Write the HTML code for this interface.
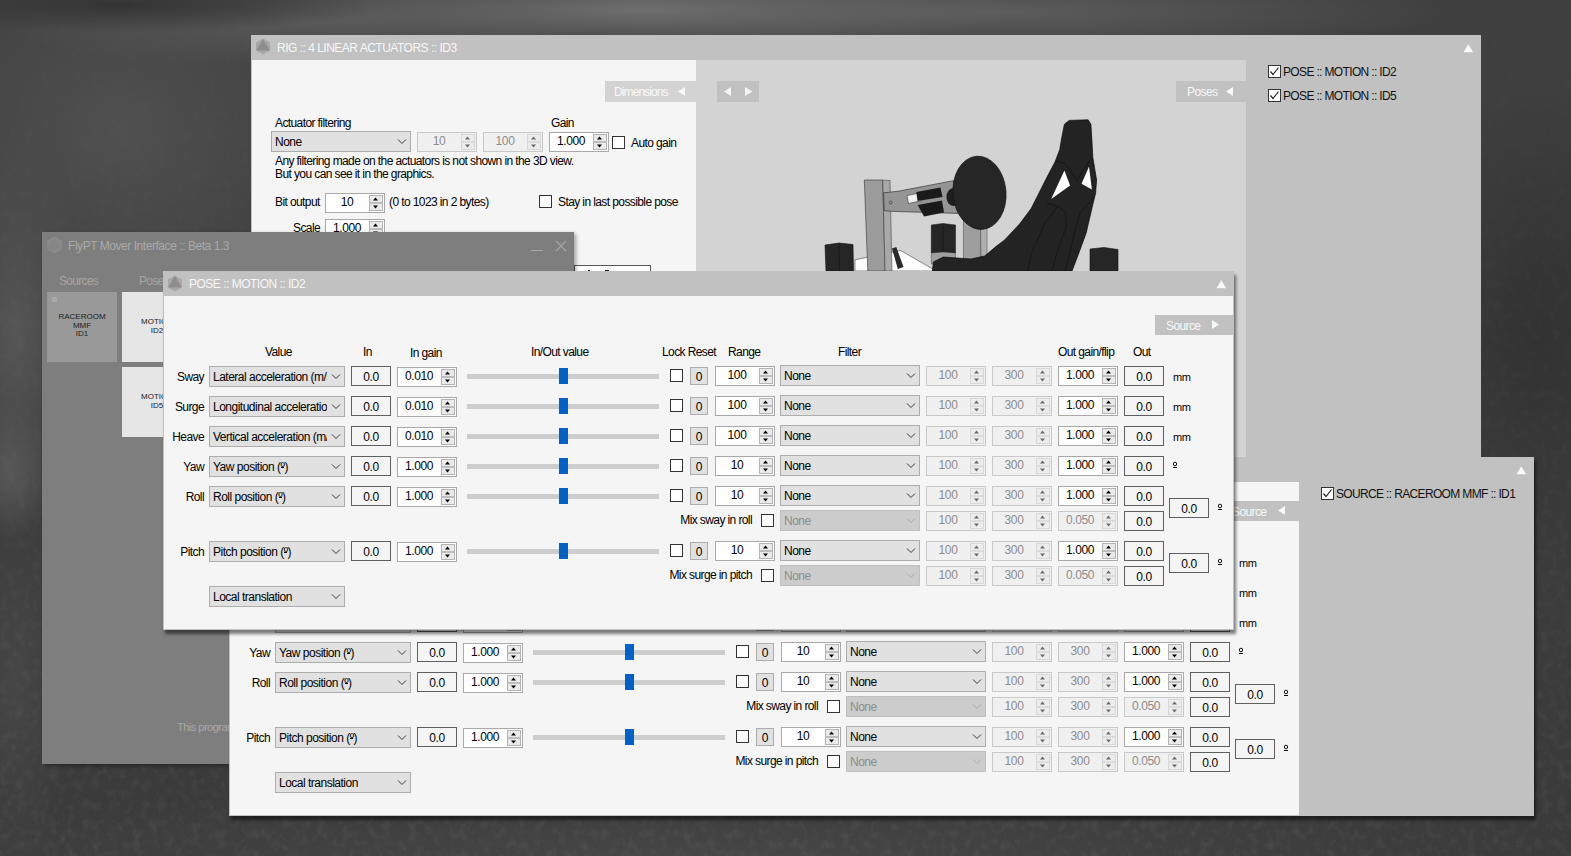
<!DOCTYPE html><html><head><meta charset="utf-8"><style>
html,body{margin:0;padding:0}
body{width:1571px;height:856px;overflow:hidden;position:relative;font-family:"Liberation Sans",sans-serif;font-size:12px}
#bg{position:absolute;left:0;top:0;width:1571px;height:856px;
background:
 radial-gradient(ellipse 260px 28px at 120px 5px, rgba(52,52,52,1), rgba(52,52,52,0) 100%),
 radial-gradient(ellipse 380px 40px at 640px 10px, rgba(110,110,110,1), rgba(110,110,110,0) 100%),
 radial-gradient(ellipse 450px 45px at 1000px 12px, rgba(92,92,92,1), rgba(92,92,92,0) 100%),
 radial-gradient(ellipse 300px 45px at 300px 22px, rgba(88,88,88,1), rgba(88,88,88,0) 100%),
 radial-gradient(ellipse 240px 210px at 120px 130px, rgba(80,80,80,1), rgba(80,80,80,0) 100%),
 radial-gradient(ellipse 70px 200px at 15px 330px, rgba(86,86,86,1), rgba(86,86,86,0) 100%),
 radial-gradient(ellipse 45px 70px at 10px 470px, rgba(88,88,88,1), rgba(88,88,88,0) 100%),
 radial-gradient(ellipse 900px 70px at 700px 856px, rgba(70,70,70,1), rgba(70,70,70,0) 100%),
 radial-gradient(ellipse 60px 200px at 15px 680px, rgba(70,70,70,1), rgba(70,70,70,0) 100%),
 radial-gradient(ellipse 150px 250px at 1540px 330px, rgba(50,50,50,1), rgba(50,50,50,0) 100%),
 linear-gradient(180deg, #404040 0%, #3c3c3c 60%, #3a3a3a 100%);}
.t{position:absolute;white-space:nowrap;line-height:14px}
.tb{position:absolute;border:1px solid;text-align:center;font-size:12px;letter-spacing:-0.4px;padding-top:1px;box-sizing:content-box}
.sp{position:absolute;border:1px solid}
.sp-t{position:absolute;left:0;top:0;width:42px;text-align:center;font-size:12px;letter-spacing:-0.4px}
.sp-b{position:absolute;right:1px;top:1px;bottom:1px;width:14px;border-left:1px solid}
.cb{position:absolute;border:1px solid;overflow:hidden}
.cb-t{position:absolute;left:3px;top:1px;overflow:hidden;white-space:nowrap;font-size:12px;letter-spacing:-0.5px}
.o{position:relative}
.o::after{content:"";position:absolute;left:0.5px;right:0.5px;top:7px;height:1px;background:currentColor}
.ck{position:absolute;width:11px;height:11px;border:1px solid}
.bt{position:absolute;border:1px solid #adadad;background:#e1e1e1;text-align:center;font-size:12px;padding-top:1px;box-sizing:content-box}
</style></head><body>
<div id="bg"></div>
<svg style="position:absolute;left:0;top:0" width="1571" height="856">
<defs>
<filter id="nz" x="0" y="0" width="100%" height="100%">
<feTurbulence type="fractalNoise" baseFrequency="0.12 0.1" numOctaves="2" seed="7" result="t"/>
<feColorMatrix type="matrix" values="0 0 0 0 1  0 0 0 0 1  0 0 0 0 1  1.4 0 0 0 -0.62" />
</filter>
<filter id="gr" x="0" y="0" width="100%" height="100%">
<feTurbulence type="fractalNoise" baseFrequency="0.9" numOctaves="1" seed="3"/>
<feColorMatrix type="matrix" values="0 0 0 0 1  0 0 0 0 1  0 0 0 0 1  1.6 0 0 0 -0.9" />
</filter>
<linearGradient id="mk" x1="0" y1="0" x2="0" y2="1"><stop offset="0" stop-color="#fff" stop-opacity="0.15"/><stop offset="0.55" stop-color="#fff" stop-opacity="0.5"/><stop offset="1" stop-color="#fff" stop-opacity="1"/></linearGradient>
<mask id="mm"><rect width="1571" height="856" fill="url(#mk)"/></mask>
</defs>
<g mask="url(#mm)">
<rect width="1571" height="856" filter="url(#nz)" opacity="0.09"/>
<rect width="1571" height="856" filter="url(#gr)" opacity="0.08"/>
</g>
</svg>
<div style="position:absolute;left:251px;top:35px;width:1230px;height:430px;background:#c1c1c1"></div>
<div style="position:absolute;left:252px;top:60px;width:444px;height:420px;background:#f5f5f5"></div>
<div style="position:absolute;left:696px;top:60px;width:550px;height:420px;background:#d3d3d3"></div>
<svg style="position:absolute;left:255px;top:38px" width="16" height="17" viewBox="0 0 16 17"><path d="M8 0.5 L15 4.5 L15 12.5 L8 16.5 L1 12.5 L1 4.5 Z" fill="#a7a7a7"/><path d="M8 1 L15 12.5 L1 12.5 Z" fill="#8e8e8e"/></svg>
<div class="t" style="left:277px;top:41px;color:#f7f7f7;font-size:12px;letter-spacing:-0.5px;">RIG :: 4 LINEAR ACTUATORS :: ID3</div>
<svg style="position:absolute;left:1463px;top:44px" width="11" height="9"><path d="M0.5 8.3 L5.3 0.3 L10.1 8.3 Z" fill="#fafafa"/></svg>
<div style="position:absolute;left:605px;top:81px;width:91px;height:21px;background:#d3d3d3"></div>
<div class="t" style="left:614px;top:85px;color:#f8f8f8;font-size:12px;letter-spacing:-0.9px;">Dimensions</div>
<svg style="position:absolute;left:677px;top:86px" width="9" height="11"><path d="M8 1 L1 5.5 L8 10 Z" fill="#f8f8f8"/></svg>
<div style="position:absolute;left:717px;top:81px;width:42px;height:21px;background:#c1c1c1"></div>
<svg style="position:absolute;left:723px;top:86px" width="32" height="11"><path d="M8 1 L1 5.5 L8 10 Z M22 1 L29.5 5.5 L22 10 Z" fill="#f4f4f4"/></svg>
<div style="position:absolute;left:1176px;top:81px;width:70px;height:21px;background:#c1c1c1"></div>
<div class="t" style="left:1187px;top:85px;color:#f8f8f8;font-size:12px;letter-spacing:-0.6px;">Poses</div>
<svg style="position:absolute;left:1225px;top:86px" width="9" height="11"><path d="M8 1 L1 5.5 L8 10 Z" fill="#f8f8f8"/></svg>
<div class="t" style="left:275px;top:116px;color:#000;font-size:12px;letter-spacing:-0.6px;">Actuator filtering</div>
<div class="t" style="left:551px;top:116px;color:#000;font-size:12px;letter-spacing:-0.6px;">Gain</div>
<div class="cb" style="left:271px;top:131px;width:138px;height:19px;background:#e1e1e1;border-color:#adadad"><div class="cb-t" style="color:#000;line-height:19px;width:118px">None</div><svg width="10" height="6" style="position:absolute;right:3px;top:7.0px"><path d="M1 0.5 L5 4.5 L9 0.5" fill="none" stroke="#3a3a3a" stroke-width="1"/></svg></div>
<div class="sp" style="left:417px;top:132px;width:58px;height:18px;background:#f0f0f0;border-color:#c9c9c9"><div class="sp-t" style="color:#8c8c8c;line-height:17px">10</div><svg width="14" height="16" style="position:absolute;left:43px;top:1px"><rect x="0.5" y="0.5" width="13" height="15" fill="#ececec" stroke="#d8d8d8" stroke-width="1"/><rect x="0" y="7.2" width="14" height="1.6" fill="#d8d8d8"/><path d="M4 5.5 L6.5 2.5 L9 5.5 Z M4 10.5 L6.5 13.5 L9 10.5 Z" fill="#6a6a6a"/></svg></div>
<div class="sp" style="left:483px;top:132px;width:58px;height:18px;background:#f0f0f0;border-color:#c9c9c9"><div class="sp-t" style="color:#8c8c8c;line-height:17px">100</div><svg width="14" height="16" style="position:absolute;left:43px;top:1px"><rect x="0.5" y="0.5" width="13" height="15" fill="#ececec" stroke="#d8d8d8" stroke-width="1"/><rect x="0" y="7.2" width="14" height="1.6" fill="#d8d8d8"/><path d="M4 5.5 L6.5 2.5 L9 5.5 Z M4 10.5 L6.5 13.5 L9 10.5 Z" fill="#6a6a6a"/></svg></div>
<div class="sp" style="left:549px;top:132px;width:58px;height:18px;background:#ffffff;border-color:#a9a9a9"><div class="sp-t" style="color:#000;line-height:17px">1.000</div><svg width="14" height="16" style="position:absolute;left:43px;top:1px"><rect x="0.5" y="0.5" width="13" height="15" fill="#eaeaea" stroke="#b4b4b4" stroke-width="1"/><rect x="0" y="7.2" width="14" height="1.6" fill="#b4b4b4"/><path d="M4 5.5 L6.5 2.5 L9 5.5 Z M4 10.5 L6.5 13.5 L9 10.5 Z" fill="#000"/></svg></div>
<div class="ck" style="left:612px;top:136px;border-color:#333;background:#fff"></div>
<div class="t" style="left:631px;top:136px;color:#000;font-size:12px;letter-spacing:-0.6px;">Auto gain</div>
<div class="t" style="left:275px;top:154px;color:#000;font-size:12px;letter-spacing:-0.6px;">Any filtering made on the actuators is not shown in the 3D view.</div>
<div class="t" style="left:275px;top:167px;color:#000;font-size:12px;letter-spacing:-0.6px;">But you can see it in the graphics.</div>
<div class="t" style="left:275px;top:195px;color:#000;font-size:12px;letter-spacing:-0.6px;">Bit output</div>
<div class="sp" style="left:325px;top:193px;width:58px;height:18px;background:#ffffff;border-color:#a9a9a9"><div class="sp-t" style="color:#000;line-height:17px">10</div><svg width="14" height="16" style="position:absolute;left:43px;top:1px"><rect x="0.5" y="0.5" width="13" height="15" fill="#eaeaea" stroke="#b4b4b4" stroke-width="1"/><rect x="0" y="7.2" width="14" height="1.6" fill="#b4b4b4"/><path d="M4 5.5 L6.5 2.5 L9 5.5 Z M4 10.5 L6.5 13.5 L9 10.5 Z" fill="#000"/></svg></div>
<div class="t" style="left:389px;top:195px;color:#000;font-size:12px;letter-spacing:-0.6px;">(0 to 1023 in 2 bytes)</div>
<div class="ck" style="left:539px;top:195px;border-color:#333;background:#fff"></div>
<div class="t" style="left:558px;top:195px;color:#000;font-size:12px;letter-spacing:-0.6px;">Stay in last possible pose</div>
<div class="t" style="left:293px;top:221px;color:#000;font-size:12px;letter-spacing:-0.6px;">Scale</div>
<div class="sp" style="left:325px;top:219px;width:58px;height:18px;background:#ffffff;border-color:#a9a9a9"><div class="sp-t" style="color:#000;line-height:17px">1.000</div><svg width="14" height="16" style="position:absolute;left:43px;top:1px"><rect x="0.5" y="0.5" width="13" height="15" fill="#eaeaea" stroke="#b4b4b4" stroke-width="1"/><rect x="0" y="7.2" width="14" height="1.6" fill="#b4b4b4"/><path d="M4 5.5 L6.5 2.5 L9 5.5 Z M4 10.5 L6.5 13.5 L9 10.5 Z" fill="#000"/></svg></div>
<div style="position:absolute;left:574px;top:265px;width:77px;height:10px;background:#fff;border:1px solid #555;border-bottom:none;box-sizing:border-box"></div>
<div style="position:absolute;left:588px;top:270px;width:2px;height:1px;background:#222"></div>
<div style="position:absolute;left:605px;top:270px;width:4px;height:1px;background:#222"></div>
<div class="ck" style="left:1268px;top:65px;border-color:#333;background:#fff"><svg width="11" height="11" style="position:absolute;left:0;top:0"><path d="M1.5 5.5 L4 8.5 L9.5 1.5" fill="none" stroke="#222" stroke-width="1.2"/></svg></div>
<div class="t" style="left:1283px;top:65px;color:#111;font-size:12px;letter-spacing:-0.65px;">POSE :: MOTION :: ID2</div>
<div class="ck" style="left:1268px;top:89px;border-color:#333;background:#fff"><svg width="11" height="11" style="position:absolute;left:0;top:0"><path d="M1.5 5.5 L4 8.5 L9.5 1.5" fill="none" stroke="#222" stroke-width="1.2"/></svg></div>
<div class="t" style="left:1283px;top:89px;color:#111;font-size:12px;letter-spacing:-0.65px;">POSE :: MOTION :: ID5</div>
<svg style="position:absolute;left:0;top:0" width="1571" height="271" viewBox="0 0 1571 271">
<polygon points="825,245 839,243 853,244.5 853.5,271 826,271" fill="#262626" stroke="#111" stroke-width="0.6"/>
<line x1="839" y1="244" x2="839.5" y2="271" stroke="#111" stroke-width="0.5"/>
<polygon points="1090,249 1104,247.5 1118,249.5 1118,271 1090,271" fill="#262626" stroke="#111" stroke-width="0.6"/>
<polygon points="855,259.8 900.6,250.5 932.7,269 932.7,271 855,271" fill="#ffffff" stroke="#222" stroke-width="0.5"/>
<polygon points="864.3,180 882.8,180 885,271 867.8,271" fill="#9c9c9c" stroke="#333" stroke-width="0.6"/>
<polygon points="882.8,180 890,180.5 892,271 885,271" fill="#a9a9a9" stroke="#333" stroke-width="0.5"/>
<polygon points="892,248.4 896.3,247 903.5,267 897.8,269" fill="#2a2a2a"/>
<polygon points="963.4,220 980.5,220 981,259.8 963.4,259.8" fill="#9e9e9e" stroke="#444" stroke-width="0.5"/>
<polygon points="980.5,220 987,220 987,259.8 981,259.8" fill="#b0b0b0" stroke="#444" stroke-width="0.5"/>
<polygon points="931.3,225 943,223.5 955.5,225 955.5,253 931.3,253" fill="#262626" stroke="#111" stroke-width="0.5"/>
<line x1="943" y1="224" x2="943" y2="262" stroke="#111" stroke-width="0.5"/>
<polygon points="931.3,253 943,252 955.5,253 955.5,264 931.3,264" fill="#a0a0a0" stroke="#333" stroke-width="0.4"/>
<polygon points="883.5,192.8 897.8,191.3 953.4,180.7 957.7,213.4 890.6,211.3 884.2,210.6" fill="#959595" stroke="#222" stroke-width="0.6"/>
<circle cx="890.6" cy="202.5" r="1.5" fill="none" stroke="#333" stroke-width="0.6"/>
<polygon points="907,195.6 920.6,192.8 922,200.6 908.5,203.5" fill="#f0f0f0" stroke="#222" stroke-width="0.5"/>
<polygon points="916.3,192 940.5,187.5 942.5,197 917.5,201" fill="#1a1a1a"/>
<polygon points="917.7,205 942,200.5 944,212.5 924,216.5" fill="#1a1a1a"/>
<ellipse cx="953.4" cy="197" rx="7" ry="9" fill="#1e1e1e"/>
<ellipse cx="979.5" cy="192.8" rx="26.5" ry="36.7" transform="rotate(-5 979.5 192.8)" fill="#262626" stroke="#111" stroke-width="0.7"/>
<polygon points="1064.4,124.2 1069.2,120.4 1088.1,119.8 1090.9,124.2 1091.9,140.3 1092.8,157.3 1096.6,180 1095.6,193.2 1092.8,204.6 1086.2,232.9 1078.6,253.7 1072,271 932.4,271 933.4,261.9 943.3,257 970.9,259 984.7,256 996.5,246.1 1004.4,240.2 1020,223.5 1031.3,208.3 1038.9,193.2 1046.5,178.1 1055,162 1059.7,149.7 1061.6,138.4" fill="#232323" stroke="#0a0a0a" stroke-width="0.7"/>
<path d="M1046.5 202.7 L1057.8 206.4 L1065.4 212.1 L1066.3 227.2 L1057.8 249.9 L1052.1 271 M1057.8 206.4 L1044.6 223.5 L1031.3 253.7 L1027.6 271 M1092.8 198.9 L1080.5 212.1 L1074.8 231 L1065.4 271 M1055.9 161 L1065.4 163.9 L1076.7 180.9 L1090.9 158.2" fill="none" stroke="#0a0a0a" stroke-width="0.5"/>
<polygon points="1064.4,170.5 1070.1,185.6 1051.2,198.9" fill="#ffffff"/>
<polygon points="1089,166.7 1091.9,189.4 1081.5,183.8" fill="#ffffff"/>
</svg>
<div style="position:absolute;left:42px;top:232px;width:532px;height:532px;background:#7e7e7e;box-shadow:2px 2px 4px rgba(0,0,0,0.35)"></div>
<svg style="position:absolute;left:46px;top:236px" width="17" height="18" viewBox="0 0 16 17"><path d="M8 0.5 L15 4.5 L15 12.5 L8 16.5 L1 12.5 L1 4.5 Z" fill="#8a8a8a"/><path d="M8 1 L15 12.5 L1 12.5 Z" fill="#868686"/></svg>
<div class="t" style="left:68px;top:239px;color:#a9a9a9;font-size:12px;letter-spacing:-0.45px;">FlyPT Mover Interface :: Beta 1.3</div>
<div style="position:absolute;left:531px;top:250px;width:12px;height:1px;background:#a6a6a6"></div>
<svg style="position:absolute;left:555px;top:240px" width="12" height="12"><path d="M1 1 L11 11 M11 1 L1 11" stroke="#a6a6a6" stroke-width="1.1"/></svg>
<div class="t" style="left:59px;top:274px;color:#a5a5a5;font-size:12px;letter-spacing:-0.7px;">Sources</div>
<div class="t" style="left:139px;top:274px;color:#a5a5a5;font-size:12px;letter-spacing:-0.7px;">Poses</div>
<div style="position:absolute;left:47px;top:292px;width:70px;height:70px;background:#999999"></div>
<div style="position:absolute;left:52px;top:297px;width:5px;height:5px;background:#a9a9a9"></div>
<div class="t" style="left:47px;top:313px;width:70px;text-align:center;font-size:8px;line-height:8.7px;color:#222;letter-spacing:0">RACEROOM<br>MMF<br>ID1</div>
<div style="position:absolute;left:122px;top:292px;width:70px;height:70px;background:#e6e6e6"></div>
<div class="t" style="left:122px;top:318px;width:70px;text-align:center;font-size:8px;line-height:8.7px;color:#222;letter-spacing:0">MOTION<br>ID2</div>
<div style="position:absolute;left:122px;top:367px;width:70px;height:70px;background:#e6e6e6"></div>
<div class="t" style="left:122px;top:393px;width:70px;text-align:center;font-size:8px;line-height:8.7px;color:#222;letter-spacing:0">MOTION<br>ID5</div>
<div class="t" style="left:177px;top:720px;color:#a8a8a8;font-size:11px;letter-spacing:-0.5px;">This program is free software</div>
<div style="position:absolute;left:229px;top:457px;width:1305px;height:359px;background:#c1c1c1;box-shadow:2px 4px 3px rgba(0,0,0,0.5)"></div>
<div style="position:absolute;left:230px;top:482px;width:1069px;height:333px;background:#f5f5f5"></div>
<svg style="position:absolute;left:233px;top:461px" width="16" height="17" viewBox="0 0 16 17"><path d="M8 0.5 L15 4.5 L15 12.5 L8 16.5 L1 12.5 L1 4.5 Z" fill="#a7a7a7"/><path d="M8 1 L15 12.5 L1 12.5 Z" fill="#8e8e8e"/></svg>
<div class="t" style="left:255px;top:463px;color:#f7f7f7;font-size:12px;letter-spacing:-0.5px;">POSE :: MOTION :: ID5</div>
<svg style="position:absolute;left:1516px;top:466px" width="11" height="9"><path d="M0.5 8.3 L5.3 0.3 L10.1 8.3 Z" fill="#fafafa"/></svg>
<div class="ck" style="left:1321px;top:487px;border-color:#333;background:#fff"><svg width="11" height="11" style="position:absolute;left:0;top:0"><path d="M1.5 5.5 L4 8.5 L9.5 1.5" fill="none" stroke="#222" stroke-width="1.2"/></svg></div>
<div class="t" style="left:1336px;top:487px;color:#111;font-size:12px;letter-spacing:-0.65px;">SOURCE :: RACEROOM MMF :: ID1</div>
<div style="position:absolute;left:1221px;top:501px;width:78px;height:20px;background:#c1c1c1"></div>
<div class="t" style="left:1232px;top:505px;color:#f8f8f8;font-size:12px;letter-spacing:-0.6px;">Source</div>
<svg style="position:absolute;left:1277px;top:505px" width="9" height="11"><path d="M8 1 L1 5.5 L8 10 Z" fill="#f8f8f8"/></svg>
<div class="t" style="left:331px;top:531px;color:#000;font-size:12px;letter-spacing:-0.6px;">Value</div>
<div class="t" style="left:429px;top:531px;color:#000;font-size:12px;letter-spacing:-0.6px;">In</div>
<div class="t" style="left:476px;top:532px;color:#000;font-size:12px;letter-spacing:-0.6px;">In gain</div>
<div class="t" style="left:597px;top:531px;color:#000;font-size:12px;letter-spacing:-0.6px;">In/Out value</div>
<div class="t" style="left:728px;top:531px;color:#000;font-size:12px;letter-spacing:-0.6px;">Lock Reset</div>
<div class="t" style="left:794px;top:531px;color:#000;font-size:12px;letter-spacing:-0.6px;">Range</div>
<div class="t" style="left:904px;top:531px;color:#000;font-size:12px;letter-spacing:-0.6px;">Filter</div>
<div class="t" style="left:1124px;top:531px;color:#000;font-size:12px;letter-spacing:-0.6px;">Out gain/flip</div>
<div class="t" style="left:1199px;top:531px;color:#000;font-size:12px;letter-spacing:-0.6px;">Out</div>
<div class="t" style="right:1301px;top:556px;color:#000;font-size:12px;letter-spacing:-0.6px;">Sway</div>
<div class="cb" style="left:275px;top:552px;width:134px;height:19px;background:#e1e1e1;border-color:#adadad"><div class="cb-t" style="color:#000;line-height:19px;width:114px">Lateral acceleration (m/s²)</div><svg width="10" height="6" style="position:absolute;right:3px;top:7.0px"><path d="M1 0.5 L5 4.5 L9 0.5" fill="none" stroke="#3a3a3a" stroke-width="1"/></svg></div>
<div class="tb" style="left:417px;top:552px;width:38px;height:17px;background:#f5f5f5;border-color:#5f5f5f;color:#000;line-height:18px">0.0</div>
<div class="sp" style="left:463px;top:553px;width:58px;height:18px;background:#ffffff;border-color:#a9a9a9"><div class="sp-t" style="color:#000;line-height:17px">0.010</div><svg width="14" height="16" style="position:absolute;left:43px;top:1px"><rect x="0.5" y="0.5" width="13" height="15" fill="#eaeaea" stroke="#b4b4b4" stroke-width="1"/><rect x="0" y="7.2" width="14" height="1.6" fill="#b4b4b4"/><path d="M4 5.5 L6.5 2.5 L9 5.5 Z M4 10.5 L6.5 13.5 L9 10.5 Z" fill="#000"/></svg></div>
<div style="position:absolute;left:533px;top:560px;width:192px;height:5px;background:#cdcdcd"></div>
<div style="position:absolute;left:625px;top:554px;width:9px;height:16px;background:#0062c9"></div>
<div class="ck" style="left:736px;top:555px;border-color:#333;background:#fff"></div>
<div class="bt" style="left:756px;top:553px;width:16px;height:15px;line-height:16px">0</div>
<div class="sp" style="left:781px;top:552px;width:58px;height:18px;background:#ffffff;border-color:#a9a9a9"><div class="sp-t" style="color:#000;line-height:17px">100</div><svg width="14" height="16" style="position:absolute;left:43px;top:1px"><rect x="0.5" y="0.5" width="13" height="15" fill="#eaeaea" stroke="#b4b4b4" stroke-width="1"/><rect x="0" y="7.2" width="14" height="1.6" fill="#b4b4b4"/><path d="M4 5.5 L6.5 2.5 L9 5.5 Z M4 10.5 L6.5 13.5 L9 10.5 Z" fill="#000"/></svg></div>
<div class="cb" style="left:846px;top:551px;width:138px;height:19px;background:#e1e1e1;border-color:#adadad"><div class="cb-t" style="color:#000;line-height:19px;width:118px">None</div><svg width="10" height="6" style="position:absolute;right:3px;top:7.0px"><path d="M1 0.5 L5 4.5 L9 0.5" fill="none" stroke="#3a3a3a" stroke-width="1"/></svg></div>
<div class="sp" style="left:992px;top:552px;width:58px;height:18px;background:#f0f0f0;border-color:#c9c9c9"><div class="sp-t" style="color:#8c8c8c;line-height:17px">100</div><svg width="14" height="16" style="position:absolute;left:43px;top:1px"><rect x="0.5" y="0.5" width="13" height="15" fill="#ececec" stroke="#d8d8d8" stroke-width="1"/><rect x="0" y="7.2" width="14" height="1.6" fill="#d8d8d8"/><path d="M4 5.5 L6.5 2.5 L9 5.5 Z M4 10.5 L6.5 13.5 L9 10.5 Z" fill="#6a6a6a"/></svg></div>
<div class="sp" style="left:1058px;top:552px;width:58px;height:18px;background:#f0f0f0;border-color:#c9c9c9"><div class="sp-t" style="color:#8c8c8c;line-height:17px">300</div><svg width="14" height="16" style="position:absolute;left:43px;top:1px"><rect x="0.5" y="0.5" width="13" height="15" fill="#ececec" stroke="#d8d8d8" stroke-width="1"/><rect x="0" y="7.2" width="14" height="1.6" fill="#d8d8d8"/><path d="M4 5.5 L6.5 2.5 L9 5.5 Z M4 10.5 L6.5 13.5 L9 10.5 Z" fill="#6a6a6a"/></svg></div>
<div class="sp" style="left:1124px;top:552px;width:58px;height:18px;background:#ffffff;border-color:#a9a9a9"><div class="sp-t" style="color:#000;line-height:17px">1.000</div><svg width="14" height="16" style="position:absolute;left:43px;top:1px"><rect x="0.5" y="0.5" width="13" height="15" fill="#eaeaea" stroke="#b4b4b4" stroke-width="1"/><rect x="0" y="7.2" width="14" height="1.6" fill="#b4b4b4"/><path d="M4 5.5 L6.5 2.5 L9 5.5 Z M4 10.5 L6.5 13.5 L9 10.5 Z" fill="#000"/></svg></div>
<div class="tb" style="left:1190px;top:552px;width:38px;height:17px;background:#f5f5f5;border-color:#5f5f5f;color:#000;line-height:18px">0.0</div>
<div class="t" style="left:1239px;top:556px;color:#000;font-size:11px;letter-spacing:-0.4px;">mm</div>
<div class="t" style="right:1301px;top:586px;color:#000;font-size:12px;letter-spacing:-0.6px;">Surge</div>
<div class="cb" style="left:275px;top:582px;width:134px;height:19px;background:#e1e1e1;border-color:#adadad"><div class="cb-t" style="color:#000;line-height:19px;width:114px">Longitudinal acceleration (m/s²)</div><svg width="10" height="6" style="position:absolute;right:3px;top:7.0px"><path d="M1 0.5 L5 4.5 L9 0.5" fill="none" stroke="#3a3a3a" stroke-width="1"/></svg></div>
<div class="tb" style="left:417px;top:582px;width:38px;height:17px;background:#f5f5f5;border-color:#5f5f5f;color:#000;line-height:18px">0.0</div>
<div class="sp" style="left:463px;top:583px;width:58px;height:18px;background:#ffffff;border-color:#a9a9a9"><div class="sp-t" style="color:#000;line-height:17px">0.010</div><svg width="14" height="16" style="position:absolute;left:43px;top:1px"><rect x="0.5" y="0.5" width="13" height="15" fill="#eaeaea" stroke="#b4b4b4" stroke-width="1"/><rect x="0" y="7.2" width="14" height="1.6" fill="#b4b4b4"/><path d="M4 5.5 L6.5 2.5 L9 5.5 Z M4 10.5 L6.5 13.5 L9 10.5 Z" fill="#000"/></svg></div>
<div style="position:absolute;left:533px;top:590px;width:192px;height:5px;background:#cdcdcd"></div>
<div style="position:absolute;left:625px;top:584px;width:9px;height:16px;background:#0062c9"></div>
<div class="ck" style="left:736px;top:585px;border-color:#333;background:#fff"></div>
<div class="bt" style="left:756px;top:583px;width:16px;height:15px;line-height:16px">0</div>
<div class="sp" style="left:781px;top:582px;width:58px;height:18px;background:#ffffff;border-color:#a9a9a9"><div class="sp-t" style="color:#000;line-height:17px">100</div><svg width="14" height="16" style="position:absolute;left:43px;top:1px"><rect x="0.5" y="0.5" width="13" height="15" fill="#eaeaea" stroke="#b4b4b4" stroke-width="1"/><rect x="0" y="7.2" width="14" height="1.6" fill="#b4b4b4"/><path d="M4 5.5 L6.5 2.5 L9 5.5 Z M4 10.5 L6.5 13.5 L9 10.5 Z" fill="#000"/></svg></div>
<div class="cb" style="left:846px;top:581px;width:138px;height:19px;background:#e1e1e1;border-color:#adadad"><div class="cb-t" style="color:#000;line-height:19px;width:118px">None</div><svg width="10" height="6" style="position:absolute;right:3px;top:7.0px"><path d="M1 0.5 L5 4.5 L9 0.5" fill="none" stroke="#3a3a3a" stroke-width="1"/></svg></div>
<div class="sp" style="left:992px;top:582px;width:58px;height:18px;background:#f0f0f0;border-color:#c9c9c9"><div class="sp-t" style="color:#8c8c8c;line-height:17px">100</div><svg width="14" height="16" style="position:absolute;left:43px;top:1px"><rect x="0.5" y="0.5" width="13" height="15" fill="#ececec" stroke="#d8d8d8" stroke-width="1"/><rect x="0" y="7.2" width="14" height="1.6" fill="#d8d8d8"/><path d="M4 5.5 L6.5 2.5 L9 5.5 Z M4 10.5 L6.5 13.5 L9 10.5 Z" fill="#6a6a6a"/></svg></div>
<div class="sp" style="left:1058px;top:582px;width:58px;height:18px;background:#f0f0f0;border-color:#c9c9c9"><div class="sp-t" style="color:#8c8c8c;line-height:17px">300</div><svg width="14" height="16" style="position:absolute;left:43px;top:1px"><rect x="0.5" y="0.5" width="13" height="15" fill="#ececec" stroke="#d8d8d8" stroke-width="1"/><rect x="0" y="7.2" width="14" height="1.6" fill="#d8d8d8"/><path d="M4 5.5 L6.5 2.5 L9 5.5 Z M4 10.5 L6.5 13.5 L9 10.5 Z" fill="#6a6a6a"/></svg></div>
<div class="sp" style="left:1124px;top:582px;width:58px;height:18px;background:#ffffff;border-color:#a9a9a9"><div class="sp-t" style="color:#000;line-height:17px">1.000</div><svg width="14" height="16" style="position:absolute;left:43px;top:1px"><rect x="0.5" y="0.5" width="13" height="15" fill="#eaeaea" stroke="#b4b4b4" stroke-width="1"/><rect x="0" y="7.2" width="14" height="1.6" fill="#b4b4b4"/><path d="M4 5.5 L6.5 2.5 L9 5.5 Z M4 10.5 L6.5 13.5 L9 10.5 Z" fill="#000"/></svg></div>
<div class="tb" style="left:1190px;top:582px;width:38px;height:17px;background:#f5f5f5;border-color:#5f5f5f;color:#000;line-height:18px">0.0</div>
<div class="t" style="left:1239px;top:586px;color:#000;font-size:11px;letter-spacing:-0.4px;">mm</div>
<div class="t" style="right:1301px;top:616px;color:#000;font-size:12px;letter-spacing:-0.6px;">Heave</div>
<div class="cb" style="left:275px;top:612px;width:134px;height:19px;background:#e1e1e1;border-color:#adadad"><div class="cb-t" style="color:#000;line-height:19px;width:114px">Vertical acceleration (m/s²)</div><svg width="10" height="6" style="position:absolute;right:3px;top:7.0px"><path d="M1 0.5 L5 4.5 L9 0.5" fill="none" stroke="#3a3a3a" stroke-width="1"/></svg></div>
<div class="tb" style="left:417px;top:612px;width:38px;height:17px;background:#f5f5f5;border-color:#5f5f5f;color:#000;line-height:18px">0.0</div>
<div class="sp" style="left:463px;top:613px;width:58px;height:18px;background:#ffffff;border-color:#a9a9a9"><div class="sp-t" style="color:#000;line-height:17px">0.010</div><svg width="14" height="16" style="position:absolute;left:43px;top:1px"><rect x="0.5" y="0.5" width="13" height="15" fill="#eaeaea" stroke="#b4b4b4" stroke-width="1"/><rect x="0" y="7.2" width="14" height="1.6" fill="#b4b4b4"/><path d="M4 5.5 L6.5 2.5 L9 5.5 Z M4 10.5 L6.5 13.5 L9 10.5 Z" fill="#000"/></svg></div>
<div style="position:absolute;left:533px;top:620px;width:192px;height:5px;background:#cdcdcd"></div>
<div style="position:absolute;left:625px;top:614px;width:9px;height:16px;background:#0062c9"></div>
<div class="ck" style="left:736px;top:615px;border-color:#333;background:#fff"></div>
<div class="bt" style="left:756px;top:613px;width:16px;height:15px;line-height:16px">0</div>
<div class="sp" style="left:781px;top:612px;width:58px;height:18px;background:#ffffff;border-color:#a9a9a9"><div class="sp-t" style="color:#000;line-height:17px">100</div><svg width="14" height="16" style="position:absolute;left:43px;top:1px"><rect x="0.5" y="0.5" width="13" height="15" fill="#eaeaea" stroke="#b4b4b4" stroke-width="1"/><rect x="0" y="7.2" width="14" height="1.6" fill="#b4b4b4"/><path d="M4 5.5 L6.5 2.5 L9 5.5 Z M4 10.5 L6.5 13.5 L9 10.5 Z" fill="#000"/></svg></div>
<div class="cb" style="left:846px;top:611px;width:138px;height:19px;background:#e1e1e1;border-color:#adadad"><div class="cb-t" style="color:#000;line-height:19px;width:118px">None</div><svg width="10" height="6" style="position:absolute;right:3px;top:7.0px"><path d="M1 0.5 L5 4.5 L9 0.5" fill="none" stroke="#3a3a3a" stroke-width="1"/></svg></div>
<div class="sp" style="left:992px;top:612px;width:58px;height:18px;background:#f0f0f0;border-color:#c9c9c9"><div class="sp-t" style="color:#8c8c8c;line-height:17px">100</div><svg width="14" height="16" style="position:absolute;left:43px;top:1px"><rect x="0.5" y="0.5" width="13" height="15" fill="#ececec" stroke="#d8d8d8" stroke-width="1"/><rect x="0" y="7.2" width="14" height="1.6" fill="#d8d8d8"/><path d="M4 5.5 L6.5 2.5 L9 5.5 Z M4 10.5 L6.5 13.5 L9 10.5 Z" fill="#6a6a6a"/></svg></div>
<div class="sp" style="left:1058px;top:612px;width:58px;height:18px;background:#f0f0f0;border-color:#c9c9c9"><div class="sp-t" style="color:#8c8c8c;line-height:17px">300</div><svg width="14" height="16" style="position:absolute;left:43px;top:1px"><rect x="0.5" y="0.5" width="13" height="15" fill="#ececec" stroke="#d8d8d8" stroke-width="1"/><rect x="0" y="7.2" width="14" height="1.6" fill="#d8d8d8"/><path d="M4 5.5 L6.5 2.5 L9 5.5 Z M4 10.5 L6.5 13.5 L9 10.5 Z" fill="#6a6a6a"/></svg></div>
<div class="sp" style="left:1124px;top:612px;width:58px;height:18px;background:#ffffff;border-color:#a9a9a9"><div class="sp-t" style="color:#000;line-height:17px">1.000</div><svg width="14" height="16" style="position:absolute;left:43px;top:1px"><rect x="0.5" y="0.5" width="13" height="15" fill="#eaeaea" stroke="#b4b4b4" stroke-width="1"/><rect x="0" y="7.2" width="14" height="1.6" fill="#b4b4b4"/><path d="M4 5.5 L6.5 2.5 L9 5.5 Z M4 10.5 L6.5 13.5 L9 10.5 Z" fill="#000"/></svg></div>
<div class="tb" style="left:1190px;top:612px;width:38px;height:17px;background:#f5f5f5;border-color:#5f5f5f;color:#000;line-height:18px">0.0</div>
<div class="t" style="left:1239px;top:616px;color:#000;font-size:11px;letter-spacing:-0.4px;">mm</div>
<div class="t" style="right:1301px;top:646px;color:#000;font-size:12px;letter-spacing:-0.6px;">Yaw</div>
<div class="cb" style="left:275px;top:642px;width:134px;height:19px;background:#e1e1e1;border-color:#adadad"><div class="cb-t" style="color:#000;line-height:19px;width:114px">Yaw position (<span class="o">º</span>)</div><svg width="10" height="6" style="position:absolute;right:3px;top:7.0px"><path d="M1 0.5 L5 4.5 L9 0.5" fill="none" stroke="#3a3a3a" stroke-width="1"/></svg></div>
<div class="tb" style="left:417px;top:642px;width:38px;height:17px;background:#f5f5f5;border-color:#5f5f5f;color:#000;line-height:18px">0.0</div>
<div class="sp" style="left:463px;top:643px;width:58px;height:18px;background:#ffffff;border-color:#a9a9a9"><div class="sp-t" style="color:#000;line-height:17px">1.000</div><svg width="14" height="16" style="position:absolute;left:43px;top:1px"><rect x="0.5" y="0.5" width="13" height="15" fill="#eaeaea" stroke="#b4b4b4" stroke-width="1"/><rect x="0" y="7.2" width="14" height="1.6" fill="#b4b4b4"/><path d="M4 5.5 L6.5 2.5 L9 5.5 Z M4 10.5 L6.5 13.5 L9 10.5 Z" fill="#000"/></svg></div>
<div style="position:absolute;left:533px;top:650px;width:192px;height:5px;background:#cdcdcd"></div>
<div style="position:absolute;left:625px;top:644px;width:9px;height:16px;background:#0062c9"></div>
<div class="ck" style="left:736px;top:645px;border-color:#333;background:#fff"></div>
<div class="bt" style="left:756px;top:643px;width:16px;height:15px;line-height:16px">0</div>
<div class="sp" style="left:781px;top:642px;width:58px;height:18px;background:#ffffff;border-color:#a9a9a9"><div class="sp-t" style="color:#000;line-height:17px">10</div><svg width="14" height="16" style="position:absolute;left:43px;top:1px"><rect x="0.5" y="0.5" width="13" height="15" fill="#eaeaea" stroke="#b4b4b4" stroke-width="1"/><rect x="0" y="7.2" width="14" height="1.6" fill="#b4b4b4"/><path d="M4 5.5 L6.5 2.5 L9 5.5 Z M4 10.5 L6.5 13.5 L9 10.5 Z" fill="#000"/></svg></div>
<div class="cb" style="left:846px;top:641px;width:138px;height:19px;background:#e1e1e1;border-color:#adadad"><div class="cb-t" style="color:#000;line-height:19px;width:118px">None</div><svg width="10" height="6" style="position:absolute;right:3px;top:7.0px"><path d="M1 0.5 L5 4.5 L9 0.5" fill="none" stroke="#3a3a3a" stroke-width="1"/></svg></div>
<div class="sp" style="left:992px;top:642px;width:58px;height:18px;background:#f0f0f0;border-color:#c9c9c9"><div class="sp-t" style="color:#8c8c8c;line-height:17px">100</div><svg width="14" height="16" style="position:absolute;left:43px;top:1px"><rect x="0.5" y="0.5" width="13" height="15" fill="#ececec" stroke="#d8d8d8" stroke-width="1"/><rect x="0" y="7.2" width="14" height="1.6" fill="#d8d8d8"/><path d="M4 5.5 L6.5 2.5 L9 5.5 Z M4 10.5 L6.5 13.5 L9 10.5 Z" fill="#6a6a6a"/></svg></div>
<div class="sp" style="left:1058px;top:642px;width:58px;height:18px;background:#f0f0f0;border-color:#c9c9c9"><div class="sp-t" style="color:#8c8c8c;line-height:17px">300</div><svg width="14" height="16" style="position:absolute;left:43px;top:1px"><rect x="0.5" y="0.5" width="13" height="15" fill="#ececec" stroke="#d8d8d8" stroke-width="1"/><rect x="0" y="7.2" width="14" height="1.6" fill="#d8d8d8"/><path d="M4 5.5 L6.5 2.5 L9 5.5 Z M4 10.5 L6.5 13.5 L9 10.5 Z" fill="#6a6a6a"/></svg></div>
<div class="sp" style="left:1124px;top:642px;width:58px;height:18px;background:#ffffff;border-color:#a9a9a9"><div class="sp-t" style="color:#000;line-height:17px">1.000</div><svg width="14" height="16" style="position:absolute;left:43px;top:1px"><rect x="0.5" y="0.5" width="13" height="15" fill="#eaeaea" stroke="#b4b4b4" stroke-width="1"/><rect x="0" y="7.2" width="14" height="1.6" fill="#b4b4b4"/><path d="M4 5.5 L6.5 2.5 L9 5.5 Z M4 10.5 L6.5 13.5 L9 10.5 Z" fill="#000"/></svg></div>
<div class="tb" style="left:1190px;top:642px;width:38px;height:17px;background:#f5f5f5;border-color:#5f5f5f;color:#000;line-height:18px">0.0</div>
<svg style="position:absolute;left:1238px;top:647px" width="7" height="9"><ellipse cx="3" cy="3" rx="1.7" ry="1.8" fill="none" stroke="#111" stroke-width="1"/><line x1="1" x2="5" y1="6.5" y2="6.5" stroke="#111" stroke-width="1"/></svg>
<div class="t" style="right:1301px;top:676px;color:#000;font-size:12px;letter-spacing:-0.6px;">Roll</div>
<div class="cb" style="left:275px;top:672px;width:134px;height:19px;background:#e1e1e1;border-color:#adadad"><div class="cb-t" style="color:#000;line-height:19px;width:114px">Roll position (<span class="o">º</span>)</div><svg width="10" height="6" style="position:absolute;right:3px;top:7.0px"><path d="M1 0.5 L5 4.5 L9 0.5" fill="none" stroke="#3a3a3a" stroke-width="1"/></svg></div>
<div class="tb" style="left:417px;top:672px;width:38px;height:17px;background:#f5f5f5;border-color:#5f5f5f;color:#000;line-height:18px">0.0</div>
<div class="sp" style="left:463px;top:673px;width:58px;height:18px;background:#ffffff;border-color:#a9a9a9"><div class="sp-t" style="color:#000;line-height:17px">1.000</div><svg width="14" height="16" style="position:absolute;left:43px;top:1px"><rect x="0.5" y="0.5" width="13" height="15" fill="#eaeaea" stroke="#b4b4b4" stroke-width="1"/><rect x="0" y="7.2" width="14" height="1.6" fill="#b4b4b4"/><path d="M4 5.5 L6.5 2.5 L9 5.5 Z M4 10.5 L6.5 13.5 L9 10.5 Z" fill="#000"/></svg></div>
<div style="position:absolute;left:533px;top:680px;width:192px;height:5px;background:#cdcdcd"></div>
<div style="position:absolute;left:625px;top:674px;width:9px;height:16px;background:#0062c9"></div>
<div class="ck" style="left:736px;top:675px;border-color:#333;background:#fff"></div>
<div class="bt" style="left:756px;top:673px;width:16px;height:15px;line-height:16px">0</div>
<div class="sp" style="left:781px;top:672px;width:58px;height:18px;background:#ffffff;border-color:#a9a9a9"><div class="sp-t" style="color:#000;line-height:17px">10</div><svg width="14" height="16" style="position:absolute;left:43px;top:1px"><rect x="0.5" y="0.5" width="13" height="15" fill="#eaeaea" stroke="#b4b4b4" stroke-width="1"/><rect x="0" y="7.2" width="14" height="1.6" fill="#b4b4b4"/><path d="M4 5.5 L6.5 2.5 L9 5.5 Z M4 10.5 L6.5 13.5 L9 10.5 Z" fill="#000"/></svg></div>
<div class="cb" style="left:846px;top:671px;width:138px;height:19px;background:#e1e1e1;border-color:#adadad"><div class="cb-t" style="color:#000;line-height:19px;width:118px">None</div><svg width="10" height="6" style="position:absolute;right:3px;top:7.0px"><path d="M1 0.5 L5 4.5 L9 0.5" fill="none" stroke="#3a3a3a" stroke-width="1"/></svg></div>
<div class="sp" style="left:992px;top:672px;width:58px;height:18px;background:#f0f0f0;border-color:#c9c9c9"><div class="sp-t" style="color:#8c8c8c;line-height:17px">100</div><svg width="14" height="16" style="position:absolute;left:43px;top:1px"><rect x="0.5" y="0.5" width="13" height="15" fill="#ececec" stroke="#d8d8d8" stroke-width="1"/><rect x="0" y="7.2" width="14" height="1.6" fill="#d8d8d8"/><path d="M4 5.5 L6.5 2.5 L9 5.5 Z M4 10.5 L6.5 13.5 L9 10.5 Z" fill="#6a6a6a"/></svg></div>
<div class="sp" style="left:1058px;top:672px;width:58px;height:18px;background:#f0f0f0;border-color:#c9c9c9"><div class="sp-t" style="color:#8c8c8c;line-height:17px">300</div><svg width="14" height="16" style="position:absolute;left:43px;top:1px"><rect x="0.5" y="0.5" width="13" height="15" fill="#ececec" stroke="#d8d8d8" stroke-width="1"/><rect x="0" y="7.2" width="14" height="1.6" fill="#d8d8d8"/><path d="M4 5.5 L6.5 2.5 L9 5.5 Z M4 10.5 L6.5 13.5 L9 10.5 Z" fill="#6a6a6a"/></svg></div>
<div class="sp" style="left:1124px;top:672px;width:58px;height:18px;background:#ffffff;border-color:#a9a9a9"><div class="sp-t" style="color:#000;line-height:17px">1.000</div><svg width="14" height="16" style="position:absolute;left:43px;top:1px"><rect x="0.5" y="0.5" width="13" height="15" fill="#eaeaea" stroke="#b4b4b4" stroke-width="1"/><rect x="0" y="7.2" width="14" height="1.6" fill="#b4b4b4"/><path d="M4 5.5 L6.5 2.5 L9 5.5 Z M4 10.5 L6.5 13.5 L9 10.5 Z" fill="#000"/></svg></div>
<div class="tb" style="left:1190px;top:672px;width:38px;height:17px;background:#f5f5f5;border-color:#5f5f5f;color:#000;line-height:18px">0.0</div>
<div class="t" style="right:753px;top:699px;color:#000;font-size:12px;letter-spacing:-0.6px;">Mix sway in roll</div>
<div class="ck" style="left:827px;top:700px;border-color:#333;background:#fff"></div>
<div class="cb" style="left:846px;top:696px;width:138px;height:19px;background:#cccccc;border-color:#bfbfbf"><div class="cb-t" style="color:#8d8d8d;line-height:19px;width:118px">None</div><svg width="10" height="6" style="position:absolute;right:3px;top:7.0px"><path d="M1 0.5 L5 4.5 L9 0.5" fill="none" stroke="#a9a9a9" stroke-width="1"/></svg></div>
<div class="sp" style="left:992px;top:697px;width:58px;height:18px;background:#f0f0f0;border-color:#c9c9c9"><div class="sp-t" style="color:#8c8c8c;line-height:17px">100</div><svg width="14" height="16" style="position:absolute;left:43px;top:1px"><rect x="0.5" y="0.5" width="13" height="15" fill="#ececec" stroke="#d8d8d8" stroke-width="1"/><rect x="0" y="7.2" width="14" height="1.6" fill="#d8d8d8"/><path d="M4 5.5 L6.5 2.5 L9 5.5 Z M4 10.5 L6.5 13.5 L9 10.5 Z" fill="#6a6a6a"/></svg></div>
<div class="sp" style="left:1058px;top:697px;width:58px;height:18px;background:#f0f0f0;border-color:#c9c9c9"><div class="sp-t" style="color:#8c8c8c;line-height:17px">300</div><svg width="14" height="16" style="position:absolute;left:43px;top:1px"><rect x="0.5" y="0.5" width="13" height="15" fill="#ececec" stroke="#d8d8d8" stroke-width="1"/><rect x="0" y="7.2" width="14" height="1.6" fill="#d8d8d8"/><path d="M4 5.5 L6.5 2.5 L9 5.5 Z M4 10.5 L6.5 13.5 L9 10.5 Z" fill="#6a6a6a"/></svg></div>
<div class="sp" style="left:1124px;top:697px;width:58px;height:18px;background:#f0f0f0;border-color:#c9c9c9"><div class="sp-t" style="color:#8c8c8c;line-height:17px">0.050</div><svg width="14" height="16" style="position:absolute;left:43px;top:1px"><rect x="0.5" y="0.5" width="13" height="15" fill="#ececec" stroke="#d8d8d8" stroke-width="1"/><rect x="0" y="7.2" width="14" height="1.6" fill="#d8d8d8"/><path d="M4 5.5 L6.5 2.5 L9 5.5 Z M4 10.5 L6.5 13.5 L9 10.5 Z" fill="#6a6a6a"/></svg></div>
<div class="tb" style="left:1190px;top:697px;width:38px;height:17px;background:#f5f5f5;border-color:#5f5f5f;color:#000;line-height:18px">0.0</div>
<div class="tb" style="left:1235px;top:684px;width:38px;height:17px;background:#f5f5f5;border-color:#5f5f5f;color:#000;line-height:18px">0.0</div>
<svg style="position:absolute;left:1283px;top:689px" width="7" height="9"><ellipse cx="3" cy="3" rx="1.7" ry="1.8" fill="none" stroke="#111" stroke-width="1"/><line x1="1" x2="5" y1="6.5" y2="6.5" stroke="#111" stroke-width="1"/></svg>
<div class="t" style="right:1301px;top:731px;color:#000;font-size:12px;letter-spacing:-0.6px;">Pitch</div>
<div class="cb" style="left:275px;top:727px;width:134px;height:19px;background:#e1e1e1;border-color:#adadad"><div class="cb-t" style="color:#000;line-height:19px;width:114px">Pitch position (<span class="o">º</span>)</div><svg width="10" height="6" style="position:absolute;right:3px;top:7.0px"><path d="M1 0.5 L5 4.5 L9 0.5" fill="none" stroke="#3a3a3a" stroke-width="1"/></svg></div>
<div class="tb" style="left:417px;top:727px;width:38px;height:17px;background:#f5f5f5;border-color:#5f5f5f;color:#000;line-height:18px">0.0</div>
<div class="sp" style="left:463px;top:728px;width:58px;height:18px;background:#ffffff;border-color:#a9a9a9"><div class="sp-t" style="color:#000;line-height:17px">1.000</div><svg width="14" height="16" style="position:absolute;left:43px;top:1px"><rect x="0.5" y="0.5" width="13" height="15" fill="#eaeaea" stroke="#b4b4b4" stroke-width="1"/><rect x="0" y="7.2" width="14" height="1.6" fill="#b4b4b4"/><path d="M4 5.5 L6.5 2.5 L9 5.5 Z M4 10.5 L6.5 13.5 L9 10.5 Z" fill="#000"/></svg></div>
<div style="position:absolute;left:533px;top:735px;width:192px;height:5px;background:#cdcdcd"></div>
<div style="position:absolute;left:625px;top:729px;width:9px;height:16px;background:#0062c9"></div>
<div class="ck" style="left:736px;top:730px;border-color:#333;background:#fff"></div>
<div class="bt" style="left:756px;top:728px;width:16px;height:15px;line-height:16px">0</div>
<div class="sp" style="left:781px;top:727px;width:58px;height:18px;background:#ffffff;border-color:#a9a9a9"><div class="sp-t" style="color:#000;line-height:17px">10</div><svg width="14" height="16" style="position:absolute;left:43px;top:1px"><rect x="0.5" y="0.5" width="13" height="15" fill="#eaeaea" stroke="#b4b4b4" stroke-width="1"/><rect x="0" y="7.2" width="14" height="1.6" fill="#b4b4b4"/><path d="M4 5.5 L6.5 2.5 L9 5.5 Z M4 10.5 L6.5 13.5 L9 10.5 Z" fill="#000"/></svg></div>
<div class="cb" style="left:846px;top:726px;width:138px;height:19px;background:#e1e1e1;border-color:#adadad"><div class="cb-t" style="color:#000;line-height:19px;width:118px">None</div><svg width="10" height="6" style="position:absolute;right:3px;top:7.0px"><path d="M1 0.5 L5 4.5 L9 0.5" fill="none" stroke="#3a3a3a" stroke-width="1"/></svg></div>
<div class="sp" style="left:992px;top:727px;width:58px;height:18px;background:#f0f0f0;border-color:#c9c9c9"><div class="sp-t" style="color:#8c8c8c;line-height:17px">100</div><svg width="14" height="16" style="position:absolute;left:43px;top:1px"><rect x="0.5" y="0.5" width="13" height="15" fill="#ececec" stroke="#d8d8d8" stroke-width="1"/><rect x="0" y="7.2" width="14" height="1.6" fill="#d8d8d8"/><path d="M4 5.5 L6.5 2.5 L9 5.5 Z M4 10.5 L6.5 13.5 L9 10.5 Z" fill="#6a6a6a"/></svg></div>
<div class="sp" style="left:1058px;top:727px;width:58px;height:18px;background:#f0f0f0;border-color:#c9c9c9"><div class="sp-t" style="color:#8c8c8c;line-height:17px">300</div><svg width="14" height="16" style="position:absolute;left:43px;top:1px"><rect x="0.5" y="0.5" width="13" height="15" fill="#ececec" stroke="#d8d8d8" stroke-width="1"/><rect x="0" y="7.2" width="14" height="1.6" fill="#d8d8d8"/><path d="M4 5.5 L6.5 2.5 L9 5.5 Z M4 10.5 L6.5 13.5 L9 10.5 Z" fill="#6a6a6a"/></svg></div>
<div class="sp" style="left:1124px;top:727px;width:58px;height:18px;background:#ffffff;border-color:#a9a9a9"><div class="sp-t" style="color:#000;line-height:17px">1.000</div><svg width="14" height="16" style="position:absolute;left:43px;top:1px"><rect x="0.5" y="0.5" width="13" height="15" fill="#eaeaea" stroke="#b4b4b4" stroke-width="1"/><rect x="0" y="7.2" width="14" height="1.6" fill="#b4b4b4"/><path d="M4 5.5 L6.5 2.5 L9 5.5 Z M4 10.5 L6.5 13.5 L9 10.5 Z" fill="#000"/></svg></div>
<div class="tb" style="left:1190px;top:727px;width:38px;height:17px;background:#f5f5f5;border-color:#5f5f5f;color:#000;line-height:18px">0.0</div>
<div class="t" style="right:753px;top:754px;color:#000;font-size:12px;letter-spacing:-0.6px;">Mix surge in pitch</div>
<div class="ck" style="left:827px;top:755px;border-color:#333;background:#fff"></div>
<div class="cb" style="left:846px;top:751px;width:138px;height:19px;background:#cccccc;border-color:#bfbfbf"><div class="cb-t" style="color:#8d8d8d;line-height:19px;width:118px">None</div><svg width="10" height="6" style="position:absolute;right:3px;top:7.0px"><path d="M1 0.5 L5 4.5 L9 0.5" fill="none" stroke="#a9a9a9" stroke-width="1"/></svg></div>
<div class="sp" style="left:992px;top:752px;width:58px;height:18px;background:#f0f0f0;border-color:#c9c9c9"><div class="sp-t" style="color:#8c8c8c;line-height:17px">100</div><svg width="14" height="16" style="position:absolute;left:43px;top:1px"><rect x="0.5" y="0.5" width="13" height="15" fill="#ececec" stroke="#d8d8d8" stroke-width="1"/><rect x="0" y="7.2" width="14" height="1.6" fill="#d8d8d8"/><path d="M4 5.5 L6.5 2.5 L9 5.5 Z M4 10.5 L6.5 13.5 L9 10.5 Z" fill="#6a6a6a"/></svg></div>
<div class="sp" style="left:1058px;top:752px;width:58px;height:18px;background:#f0f0f0;border-color:#c9c9c9"><div class="sp-t" style="color:#8c8c8c;line-height:17px">300</div><svg width="14" height="16" style="position:absolute;left:43px;top:1px"><rect x="0.5" y="0.5" width="13" height="15" fill="#ececec" stroke="#d8d8d8" stroke-width="1"/><rect x="0" y="7.2" width="14" height="1.6" fill="#d8d8d8"/><path d="M4 5.5 L6.5 2.5 L9 5.5 Z M4 10.5 L6.5 13.5 L9 10.5 Z" fill="#6a6a6a"/></svg></div>
<div class="sp" style="left:1124px;top:752px;width:58px;height:18px;background:#f0f0f0;border-color:#c9c9c9"><div class="sp-t" style="color:#8c8c8c;line-height:17px">0.050</div><svg width="14" height="16" style="position:absolute;left:43px;top:1px"><rect x="0.5" y="0.5" width="13" height="15" fill="#ececec" stroke="#d8d8d8" stroke-width="1"/><rect x="0" y="7.2" width="14" height="1.6" fill="#d8d8d8"/><path d="M4 5.5 L6.5 2.5 L9 5.5 Z M4 10.5 L6.5 13.5 L9 10.5 Z" fill="#6a6a6a"/></svg></div>
<div class="tb" style="left:1190px;top:752px;width:38px;height:17px;background:#f5f5f5;border-color:#5f5f5f;color:#000;line-height:18px">0.0</div>
<div class="tb" style="left:1235px;top:739px;width:38px;height:17px;background:#f5f5f5;border-color:#5f5f5f;color:#000;line-height:18px">0.0</div>
<svg style="position:absolute;left:1283px;top:744px" width="7" height="9"><ellipse cx="3" cy="3" rx="1.7" ry="1.8" fill="none" stroke="#111" stroke-width="1"/><line x1="1" x2="5" y1="6.5" y2="6.5" stroke="#111" stroke-width="1"/></svg>
<div class="cb" style="left:275px;top:772px;width:134px;height:19px;background:#e1e1e1;border-color:#adadad"><div class="cb-t" style="color:#000;line-height:19px;width:114px">Local translation</div><svg width="10" height="6" style="position:absolute;right:3px;top:7.0px"><path d="M1 0.5 L5 4.5 L9 0.5" fill="none" stroke="#3a3a3a" stroke-width="1"/></svg></div>
<div style="position:absolute;left:163px;top:271px;width:1071px;height:359px;background:#c1c1c1;box-shadow:2px 4px 3px rgba(0,0,0,0.5)"></div>
<div style="position:absolute;left:164px;top:296px;width:1069px;height:333px;background:#f5f5f5"></div>
<svg style="position:absolute;left:167px;top:275px" width="16" height="17" viewBox="0 0 16 17"><path d="M8 0.5 L15 4.5 L15 12.5 L8 16.5 L1 12.5 L1 4.5 Z" fill="#a7a7a7"/><path d="M8 1 L15 12.5 L1 12.5 Z" fill="#8e8e8e"/></svg>
<div class="t" style="left:189px;top:277px;color:#f7f7f7;font-size:12px;letter-spacing:-0.5px;">POSE :: MOTION :: ID2</div>
<svg style="position:absolute;left:1216px;top:280px" width="11" height="9"><path d="M0.5 8.3 L5.3 0.3 L10.1 8.3 Z" fill="#fafafa"/></svg>
<div style="position:absolute;left:1155px;top:315px;width:78px;height:20px;background:#c1c1c1"></div>
<div class="t" style="left:1166px;top:319px;color:#f8f8f8;font-size:12px;letter-spacing:-0.6px;">Source</div>
<svg style="position:absolute;left:1211px;top:319px" width="9" height="11"><path d="M1 1 L8 5.5 L1 10 Z" fill="#f8f8f8"/></svg>
<div class="t" style="left:265px;top:345px;color:#000;font-size:12px;letter-spacing:-0.6px;">Value</div>
<div class="t" style="left:363px;top:345px;color:#000;font-size:12px;letter-spacing:-0.6px;">In</div>
<div class="t" style="left:410px;top:346px;color:#000;font-size:12px;letter-spacing:-0.6px;">In gain</div>
<div class="t" style="left:531px;top:345px;color:#000;font-size:12px;letter-spacing:-0.6px;">In/Out value</div>
<div class="t" style="left:662px;top:345px;color:#000;font-size:12px;letter-spacing:-0.6px;">Lock Reset</div>
<div class="t" style="left:728px;top:345px;color:#000;font-size:12px;letter-spacing:-0.6px;">Range</div>
<div class="t" style="left:838px;top:345px;color:#000;font-size:12px;letter-spacing:-0.6px;">Filter</div>
<div class="t" style="left:1058px;top:345px;color:#000;font-size:12px;letter-spacing:-0.6px;">Out gain/flip</div>
<div class="t" style="left:1133px;top:345px;color:#000;font-size:12px;letter-spacing:-0.6px;">Out</div>
<div class="t" style="right:1367px;top:370px;color:#000;font-size:12px;letter-spacing:-0.6px;">Sway</div>
<div class="cb" style="left:209px;top:366px;width:134px;height:19px;background:#e1e1e1;border-color:#adadad"><div class="cb-t" style="color:#000;line-height:19px;width:114px">Lateral acceleration (m/s²)</div><svg width="10" height="6" style="position:absolute;right:3px;top:7.0px"><path d="M1 0.5 L5 4.5 L9 0.5" fill="none" stroke="#3a3a3a" stroke-width="1"/></svg></div>
<div class="tb" style="left:351px;top:366px;width:38px;height:17px;background:#f5f5f5;border-color:#5f5f5f;color:#000;line-height:18px">0.0</div>
<div class="sp" style="left:397px;top:367px;width:58px;height:18px;background:#ffffff;border-color:#a9a9a9"><div class="sp-t" style="color:#000;line-height:17px">0.010</div><svg width="14" height="16" style="position:absolute;left:43px;top:1px"><rect x="0.5" y="0.5" width="13" height="15" fill="#eaeaea" stroke="#b4b4b4" stroke-width="1"/><rect x="0" y="7.2" width="14" height="1.6" fill="#b4b4b4"/><path d="M4 5.5 L6.5 2.5 L9 5.5 Z M4 10.5 L6.5 13.5 L9 10.5 Z" fill="#000"/></svg></div>
<div style="position:absolute;left:467px;top:374px;width:192px;height:5px;background:#cdcdcd"></div>
<div style="position:absolute;left:559px;top:368px;width:9px;height:16px;background:#0062c9"></div>
<div class="ck" style="left:670px;top:369px;border-color:#333;background:#fff"></div>
<div class="bt" style="left:690px;top:367px;width:16px;height:15px;line-height:16px">0</div>
<div class="sp" style="left:715px;top:366px;width:58px;height:18px;background:#ffffff;border-color:#a9a9a9"><div class="sp-t" style="color:#000;line-height:17px">100</div><svg width="14" height="16" style="position:absolute;left:43px;top:1px"><rect x="0.5" y="0.5" width="13" height="15" fill="#eaeaea" stroke="#b4b4b4" stroke-width="1"/><rect x="0" y="7.2" width="14" height="1.6" fill="#b4b4b4"/><path d="M4 5.5 L6.5 2.5 L9 5.5 Z M4 10.5 L6.5 13.5 L9 10.5 Z" fill="#000"/></svg></div>
<div class="cb" style="left:780px;top:365px;width:138px;height:19px;background:#e1e1e1;border-color:#adadad"><div class="cb-t" style="color:#000;line-height:19px;width:118px">None</div><svg width="10" height="6" style="position:absolute;right:3px;top:7.0px"><path d="M1 0.5 L5 4.5 L9 0.5" fill="none" stroke="#3a3a3a" stroke-width="1"/></svg></div>
<div class="sp" style="left:926px;top:366px;width:58px;height:18px;background:#f0f0f0;border-color:#c9c9c9"><div class="sp-t" style="color:#8c8c8c;line-height:17px">100</div><svg width="14" height="16" style="position:absolute;left:43px;top:1px"><rect x="0.5" y="0.5" width="13" height="15" fill="#ececec" stroke="#d8d8d8" stroke-width="1"/><rect x="0" y="7.2" width="14" height="1.6" fill="#d8d8d8"/><path d="M4 5.5 L6.5 2.5 L9 5.5 Z M4 10.5 L6.5 13.5 L9 10.5 Z" fill="#6a6a6a"/></svg></div>
<div class="sp" style="left:992px;top:366px;width:58px;height:18px;background:#f0f0f0;border-color:#c9c9c9"><div class="sp-t" style="color:#8c8c8c;line-height:17px">300</div><svg width="14" height="16" style="position:absolute;left:43px;top:1px"><rect x="0.5" y="0.5" width="13" height="15" fill="#ececec" stroke="#d8d8d8" stroke-width="1"/><rect x="0" y="7.2" width="14" height="1.6" fill="#d8d8d8"/><path d="M4 5.5 L6.5 2.5 L9 5.5 Z M4 10.5 L6.5 13.5 L9 10.5 Z" fill="#6a6a6a"/></svg></div>
<div class="sp" style="left:1058px;top:366px;width:58px;height:18px;background:#ffffff;border-color:#a9a9a9"><div class="sp-t" style="color:#000;line-height:17px">1.000</div><svg width="14" height="16" style="position:absolute;left:43px;top:1px"><rect x="0.5" y="0.5" width="13" height="15" fill="#eaeaea" stroke="#b4b4b4" stroke-width="1"/><rect x="0" y="7.2" width="14" height="1.6" fill="#b4b4b4"/><path d="M4 5.5 L6.5 2.5 L9 5.5 Z M4 10.5 L6.5 13.5 L9 10.5 Z" fill="#000"/></svg></div>
<div class="tb" style="left:1124px;top:366px;width:38px;height:17px;background:#f5f5f5;border-color:#5f5f5f;color:#000;line-height:18px">0.0</div>
<div class="t" style="left:1173px;top:370px;color:#000;font-size:11px;letter-spacing:-0.4px;">mm</div>
<div class="t" style="right:1367px;top:400px;color:#000;font-size:12px;letter-spacing:-0.6px;">Surge</div>
<div class="cb" style="left:209px;top:396px;width:134px;height:19px;background:#e1e1e1;border-color:#adadad"><div class="cb-t" style="color:#000;line-height:19px;width:114px">Longitudinal acceleration (m/s²)</div><svg width="10" height="6" style="position:absolute;right:3px;top:7.0px"><path d="M1 0.5 L5 4.5 L9 0.5" fill="none" stroke="#3a3a3a" stroke-width="1"/></svg></div>
<div class="tb" style="left:351px;top:396px;width:38px;height:17px;background:#f5f5f5;border-color:#5f5f5f;color:#000;line-height:18px">0.0</div>
<div class="sp" style="left:397px;top:397px;width:58px;height:18px;background:#ffffff;border-color:#a9a9a9"><div class="sp-t" style="color:#000;line-height:17px">0.010</div><svg width="14" height="16" style="position:absolute;left:43px;top:1px"><rect x="0.5" y="0.5" width="13" height="15" fill="#eaeaea" stroke="#b4b4b4" stroke-width="1"/><rect x="0" y="7.2" width="14" height="1.6" fill="#b4b4b4"/><path d="M4 5.5 L6.5 2.5 L9 5.5 Z M4 10.5 L6.5 13.5 L9 10.5 Z" fill="#000"/></svg></div>
<div style="position:absolute;left:467px;top:404px;width:192px;height:5px;background:#cdcdcd"></div>
<div style="position:absolute;left:559px;top:398px;width:9px;height:16px;background:#0062c9"></div>
<div class="ck" style="left:670px;top:399px;border-color:#333;background:#fff"></div>
<div class="bt" style="left:690px;top:397px;width:16px;height:15px;line-height:16px">0</div>
<div class="sp" style="left:715px;top:396px;width:58px;height:18px;background:#ffffff;border-color:#a9a9a9"><div class="sp-t" style="color:#000;line-height:17px">100</div><svg width="14" height="16" style="position:absolute;left:43px;top:1px"><rect x="0.5" y="0.5" width="13" height="15" fill="#eaeaea" stroke="#b4b4b4" stroke-width="1"/><rect x="0" y="7.2" width="14" height="1.6" fill="#b4b4b4"/><path d="M4 5.5 L6.5 2.5 L9 5.5 Z M4 10.5 L6.5 13.5 L9 10.5 Z" fill="#000"/></svg></div>
<div class="cb" style="left:780px;top:395px;width:138px;height:19px;background:#e1e1e1;border-color:#adadad"><div class="cb-t" style="color:#000;line-height:19px;width:118px">None</div><svg width="10" height="6" style="position:absolute;right:3px;top:7.0px"><path d="M1 0.5 L5 4.5 L9 0.5" fill="none" stroke="#3a3a3a" stroke-width="1"/></svg></div>
<div class="sp" style="left:926px;top:396px;width:58px;height:18px;background:#f0f0f0;border-color:#c9c9c9"><div class="sp-t" style="color:#8c8c8c;line-height:17px">100</div><svg width="14" height="16" style="position:absolute;left:43px;top:1px"><rect x="0.5" y="0.5" width="13" height="15" fill="#ececec" stroke="#d8d8d8" stroke-width="1"/><rect x="0" y="7.2" width="14" height="1.6" fill="#d8d8d8"/><path d="M4 5.5 L6.5 2.5 L9 5.5 Z M4 10.5 L6.5 13.5 L9 10.5 Z" fill="#6a6a6a"/></svg></div>
<div class="sp" style="left:992px;top:396px;width:58px;height:18px;background:#f0f0f0;border-color:#c9c9c9"><div class="sp-t" style="color:#8c8c8c;line-height:17px">300</div><svg width="14" height="16" style="position:absolute;left:43px;top:1px"><rect x="0.5" y="0.5" width="13" height="15" fill="#ececec" stroke="#d8d8d8" stroke-width="1"/><rect x="0" y="7.2" width="14" height="1.6" fill="#d8d8d8"/><path d="M4 5.5 L6.5 2.5 L9 5.5 Z M4 10.5 L6.5 13.5 L9 10.5 Z" fill="#6a6a6a"/></svg></div>
<div class="sp" style="left:1058px;top:396px;width:58px;height:18px;background:#ffffff;border-color:#a9a9a9"><div class="sp-t" style="color:#000;line-height:17px">1.000</div><svg width="14" height="16" style="position:absolute;left:43px;top:1px"><rect x="0.5" y="0.5" width="13" height="15" fill="#eaeaea" stroke="#b4b4b4" stroke-width="1"/><rect x="0" y="7.2" width="14" height="1.6" fill="#b4b4b4"/><path d="M4 5.5 L6.5 2.5 L9 5.5 Z M4 10.5 L6.5 13.5 L9 10.5 Z" fill="#000"/></svg></div>
<div class="tb" style="left:1124px;top:396px;width:38px;height:17px;background:#f5f5f5;border-color:#5f5f5f;color:#000;line-height:18px">0.0</div>
<div class="t" style="left:1173px;top:400px;color:#000;font-size:11px;letter-spacing:-0.4px;">mm</div>
<div class="t" style="right:1367px;top:430px;color:#000;font-size:12px;letter-spacing:-0.6px;">Heave</div>
<div class="cb" style="left:209px;top:426px;width:134px;height:19px;background:#e1e1e1;border-color:#adadad"><div class="cb-t" style="color:#000;line-height:19px;width:114px">Vertical acceleration (m/s²)</div><svg width="10" height="6" style="position:absolute;right:3px;top:7.0px"><path d="M1 0.5 L5 4.5 L9 0.5" fill="none" stroke="#3a3a3a" stroke-width="1"/></svg></div>
<div class="tb" style="left:351px;top:426px;width:38px;height:17px;background:#f5f5f5;border-color:#5f5f5f;color:#000;line-height:18px">0.0</div>
<div class="sp" style="left:397px;top:427px;width:58px;height:18px;background:#ffffff;border-color:#a9a9a9"><div class="sp-t" style="color:#000;line-height:17px">0.010</div><svg width="14" height="16" style="position:absolute;left:43px;top:1px"><rect x="0.5" y="0.5" width="13" height="15" fill="#eaeaea" stroke="#b4b4b4" stroke-width="1"/><rect x="0" y="7.2" width="14" height="1.6" fill="#b4b4b4"/><path d="M4 5.5 L6.5 2.5 L9 5.5 Z M4 10.5 L6.5 13.5 L9 10.5 Z" fill="#000"/></svg></div>
<div style="position:absolute;left:467px;top:434px;width:192px;height:5px;background:#cdcdcd"></div>
<div style="position:absolute;left:559px;top:428px;width:9px;height:16px;background:#0062c9"></div>
<div class="ck" style="left:670px;top:429px;border-color:#333;background:#fff"></div>
<div class="bt" style="left:690px;top:427px;width:16px;height:15px;line-height:16px">0</div>
<div class="sp" style="left:715px;top:426px;width:58px;height:18px;background:#ffffff;border-color:#a9a9a9"><div class="sp-t" style="color:#000;line-height:17px">100</div><svg width="14" height="16" style="position:absolute;left:43px;top:1px"><rect x="0.5" y="0.5" width="13" height="15" fill="#eaeaea" stroke="#b4b4b4" stroke-width="1"/><rect x="0" y="7.2" width="14" height="1.6" fill="#b4b4b4"/><path d="M4 5.5 L6.5 2.5 L9 5.5 Z M4 10.5 L6.5 13.5 L9 10.5 Z" fill="#000"/></svg></div>
<div class="cb" style="left:780px;top:425px;width:138px;height:19px;background:#e1e1e1;border-color:#adadad"><div class="cb-t" style="color:#000;line-height:19px;width:118px">None</div><svg width="10" height="6" style="position:absolute;right:3px;top:7.0px"><path d="M1 0.5 L5 4.5 L9 0.5" fill="none" stroke="#3a3a3a" stroke-width="1"/></svg></div>
<div class="sp" style="left:926px;top:426px;width:58px;height:18px;background:#f0f0f0;border-color:#c9c9c9"><div class="sp-t" style="color:#8c8c8c;line-height:17px">100</div><svg width="14" height="16" style="position:absolute;left:43px;top:1px"><rect x="0.5" y="0.5" width="13" height="15" fill="#ececec" stroke="#d8d8d8" stroke-width="1"/><rect x="0" y="7.2" width="14" height="1.6" fill="#d8d8d8"/><path d="M4 5.5 L6.5 2.5 L9 5.5 Z M4 10.5 L6.5 13.5 L9 10.5 Z" fill="#6a6a6a"/></svg></div>
<div class="sp" style="left:992px;top:426px;width:58px;height:18px;background:#f0f0f0;border-color:#c9c9c9"><div class="sp-t" style="color:#8c8c8c;line-height:17px">300</div><svg width="14" height="16" style="position:absolute;left:43px;top:1px"><rect x="0.5" y="0.5" width="13" height="15" fill="#ececec" stroke="#d8d8d8" stroke-width="1"/><rect x="0" y="7.2" width="14" height="1.6" fill="#d8d8d8"/><path d="M4 5.5 L6.5 2.5 L9 5.5 Z M4 10.5 L6.5 13.5 L9 10.5 Z" fill="#6a6a6a"/></svg></div>
<div class="sp" style="left:1058px;top:426px;width:58px;height:18px;background:#ffffff;border-color:#a9a9a9"><div class="sp-t" style="color:#000;line-height:17px">1.000</div><svg width="14" height="16" style="position:absolute;left:43px;top:1px"><rect x="0.5" y="0.5" width="13" height="15" fill="#eaeaea" stroke="#b4b4b4" stroke-width="1"/><rect x="0" y="7.2" width="14" height="1.6" fill="#b4b4b4"/><path d="M4 5.5 L6.5 2.5 L9 5.5 Z M4 10.5 L6.5 13.5 L9 10.5 Z" fill="#000"/></svg></div>
<div class="tb" style="left:1124px;top:426px;width:38px;height:17px;background:#f5f5f5;border-color:#5f5f5f;color:#000;line-height:18px">0.0</div>
<div class="t" style="left:1173px;top:430px;color:#000;font-size:11px;letter-spacing:-0.4px;">mm</div>
<div class="t" style="right:1367px;top:460px;color:#000;font-size:12px;letter-spacing:-0.6px;">Yaw</div>
<div class="cb" style="left:209px;top:456px;width:134px;height:19px;background:#e1e1e1;border-color:#adadad"><div class="cb-t" style="color:#000;line-height:19px;width:114px">Yaw position (<span class="o">º</span>)</div><svg width="10" height="6" style="position:absolute;right:3px;top:7.0px"><path d="M1 0.5 L5 4.5 L9 0.5" fill="none" stroke="#3a3a3a" stroke-width="1"/></svg></div>
<div class="tb" style="left:351px;top:456px;width:38px;height:17px;background:#f5f5f5;border-color:#5f5f5f;color:#000;line-height:18px">0.0</div>
<div class="sp" style="left:397px;top:457px;width:58px;height:18px;background:#ffffff;border-color:#a9a9a9"><div class="sp-t" style="color:#000;line-height:17px">1.000</div><svg width="14" height="16" style="position:absolute;left:43px;top:1px"><rect x="0.5" y="0.5" width="13" height="15" fill="#eaeaea" stroke="#b4b4b4" stroke-width="1"/><rect x="0" y="7.2" width="14" height="1.6" fill="#b4b4b4"/><path d="M4 5.5 L6.5 2.5 L9 5.5 Z M4 10.5 L6.5 13.5 L9 10.5 Z" fill="#000"/></svg></div>
<div style="position:absolute;left:467px;top:464px;width:192px;height:5px;background:#cdcdcd"></div>
<div style="position:absolute;left:559px;top:458px;width:9px;height:16px;background:#0062c9"></div>
<div class="ck" style="left:670px;top:459px;border-color:#333;background:#fff"></div>
<div class="bt" style="left:690px;top:457px;width:16px;height:15px;line-height:16px">0</div>
<div class="sp" style="left:715px;top:456px;width:58px;height:18px;background:#ffffff;border-color:#a9a9a9"><div class="sp-t" style="color:#000;line-height:17px">10</div><svg width="14" height="16" style="position:absolute;left:43px;top:1px"><rect x="0.5" y="0.5" width="13" height="15" fill="#eaeaea" stroke="#b4b4b4" stroke-width="1"/><rect x="0" y="7.2" width="14" height="1.6" fill="#b4b4b4"/><path d="M4 5.5 L6.5 2.5 L9 5.5 Z M4 10.5 L6.5 13.5 L9 10.5 Z" fill="#000"/></svg></div>
<div class="cb" style="left:780px;top:455px;width:138px;height:19px;background:#e1e1e1;border-color:#adadad"><div class="cb-t" style="color:#000;line-height:19px;width:118px">None</div><svg width="10" height="6" style="position:absolute;right:3px;top:7.0px"><path d="M1 0.5 L5 4.5 L9 0.5" fill="none" stroke="#3a3a3a" stroke-width="1"/></svg></div>
<div class="sp" style="left:926px;top:456px;width:58px;height:18px;background:#f0f0f0;border-color:#c9c9c9"><div class="sp-t" style="color:#8c8c8c;line-height:17px">100</div><svg width="14" height="16" style="position:absolute;left:43px;top:1px"><rect x="0.5" y="0.5" width="13" height="15" fill="#ececec" stroke="#d8d8d8" stroke-width="1"/><rect x="0" y="7.2" width="14" height="1.6" fill="#d8d8d8"/><path d="M4 5.5 L6.5 2.5 L9 5.5 Z M4 10.5 L6.5 13.5 L9 10.5 Z" fill="#6a6a6a"/></svg></div>
<div class="sp" style="left:992px;top:456px;width:58px;height:18px;background:#f0f0f0;border-color:#c9c9c9"><div class="sp-t" style="color:#8c8c8c;line-height:17px">300</div><svg width="14" height="16" style="position:absolute;left:43px;top:1px"><rect x="0.5" y="0.5" width="13" height="15" fill="#ececec" stroke="#d8d8d8" stroke-width="1"/><rect x="0" y="7.2" width="14" height="1.6" fill="#d8d8d8"/><path d="M4 5.5 L6.5 2.5 L9 5.5 Z M4 10.5 L6.5 13.5 L9 10.5 Z" fill="#6a6a6a"/></svg></div>
<div class="sp" style="left:1058px;top:456px;width:58px;height:18px;background:#ffffff;border-color:#a9a9a9"><div class="sp-t" style="color:#000;line-height:17px">1.000</div><svg width="14" height="16" style="position:absolute;left:43px;top:1px"><rect x="0.5" y="0.5" width="13" height="15" fill="#eaeaea" stroke="#b4b4b4" stroke-width="1"/><rect x="0" y="7.2" width="14" height="1.6" fill="#b4b4b4"/><path d="M4 5.5 L6.5 2.5 L9 5.5 Z M4 10.5 L6.5 13.5 L9 10.5 Z" fill="#000"/></svg></div>
<div class="tb" style="left:1124px;top:456px;width:38px;height:17px;background:#f5f5f5;border-color:#5f5f5f;color:#000;line-height:18px">0.0</div>
<svg style="position:absolute;left:1172px;top:461px" width="7" height="9"><ellipse cx="3" cy="3" rx="1.7" ry="1.8" fill="none" stroke="#111" stroke-width="1"/><line x1="1" x2="5" y1="6.5" y2="6.5" stroke="#111" stroke-width="1"/></svg>
<div class="t" style="right:1367px;top:490px;color:#000;font-size:12px;letter-spacing:-0.6px;">Roll</div>
<div class="cb" style="left:209px;top:486px;width:134px;height:19px;background:#e1e1e1;border-color:#adadad"><div class="cb-t" style="color:#000;line-height:19px;width:114px">Roll position (<span class="o">º</span>)</div><svg width="10" height="6" style="position:absolute;right:3px;top:7.0px"><path d="M1 0.5 L5 4.5 L9 0.5" fill="none" stroke="#3a3a3a" stroke-width="1"/></svg></div>
<div class="tb" style="left:351px;top:486px;width:38px;height:17px;background:#f5f5f5;border-color:#5f5f5f;color:#000;line-height:18px">0.0</div>
<div class="sp" style="left:397px;top:487px;width:58px;height:18px;background:#ffffff;border-color:#a9a9a9"><div class="sp-t" style="color:#000;line-height:17px">1.000</div><svg width="14" height="16" style="position:absolute;left:43px;top:1px"><rect x="0.5" y="0.5" width="13" height="15" fill="#eaeaea" stroke="#b4b4b4" stroke-width="1"/><rect x="0" y="7.2" width="14" height="1.6" fill="#b4b4b4"/><path d="M4 5.5 L6.5 2.5 L9 5.5 Z M4 10.5 L6.5 13.5 L9 10.5 Z" fill="#000"/></svg></div>
<div style="position:absolute;left:467px;top:494px;width:192px;height:5px;background:#cdcdcd"></div>
<div style="position:absolute;left:559px;top:488px;width:9px;height:16px;background:#0062c9"></div>
<div class="ck" style="left:670px;top:489px;border-color:#333;background:#fff"></div>
<div class="bt" style="left:690px;top:487px;width:16px;height:15px;line-height:16px">0</div>
<div class="sp" style="left:715px;top:486px;width:58px;height:18px;background:#ffffff;border-color:#a9a9a9"><div class="sp-t" style="color:#000;line-height:17px">10</div><svg width="14" height="16" style="position:absolute;left:43px;top:1px"><rect x="0.5" y="0.5" width="13" height="15" fill="#eaeaea" stroke="#b4b4b4" stroke-width="1"/><rect x="0" y="7.2" width="14" height="1.6" fill="#b4b4b4"/><path d="M4 5.5 L6.5 2.5 L9 5.5 Z M4 10.5 L6.5 13.5 L9 10.5 Z" fill="#000"/></svg></div>
<div class="cb" style="left:780px;top:485px;width:138px;height:19px;background:#e1e1e1;border-color:#adadad"><div class="cb-t" style="color:#000;line-height:19px;width:118px">None</div><svg width="10" height="6" style="position:absolute;right:3px;top:7.0px"><path d="M1 0.5 L5 4.5 L9 0.5" fill="none" stroke="#3a3a3a" stroke-width="1"/></svg></div>
<div class="sp" style="left:926px;top:486px;width:58px;height:18px;background:#f0f0f0;border-color:#c9c9c9"><div class="sp-t" style="color:#8c8c8c;line-height:17px">100</div><svg width="14" height="16" style="position:absolute;left:43px;top:1px"><rect x="0.5" y="0.5" width="13" height="15" fill="#ececec" stroke="#d8d8d8" stroke-width="1"/><rect x="0" y="7.2" width="14" height="1.6" fill="#d8d8d8"/><path d="M4 5.5 L6.5 2.5 L9 5.5 Z M4 10.5 L6.5 13.5 L9 10.5 Z" fill="#6a6a6a"/></svg></div>
<div class="sp" style="left:992px;top:486px;width:58px;height:18px;background:#f0f0f0;border-color:#c9c9c9"><div class="sp-t" style="color:#8c8c8c;line-height:17px">300</div><svg width="14" height="16" style="position:absolute;left:43px;top:1px"><rect x="0.5" y="0.5" width="13" height="15" fill="#ececec" stroke="#d8d8d8" stroke-width="1"/><rect x="0" y="7.2" width="14" height="1.6" fill="#d8d8d8"/><path d="M4 5.5 L6.5 2.5 L9 5.5 Z M4 10.5 L6.5 13.5 L9 10.5 Z" fill="#6a6a6a"/></svg></div>
<div class="sp" style="left:1058px;top:486px;width:58px;height:18px;background:#ffffff;border-color:#a9a9a9"><div class="sp-t" style="color:#000;line-height:17px">1.000</div><svg width="14" height="16" style="position:absolute;left:43px;top:1px"><rect x="0.5" y="0.5" width="13" height="15" fill="#eaeaea" stroke="#b4b4b4" stroke-width="1"/><rect x="0" y="7.2" width="14" height="1.6" fill="#b4b4b4"/><path d="M4 5.5 L6.5 2.5 L9 5.5 Z M4 10.5 L6.5 13.5 L9 10.5 Z" fill="#000"/></svg></div>
<div class="tb" style="left:1124px;top:486px;width:38px;height:17px;background:#f5f5f5;border-color:#5f5f5f;color:#000;line-height:18px">0.0</div>
<div class="t" style="right:819px;top:513px;color:#000;font-size:12px;letter-spacing:-0.6px;">Mix sway in roll</div>
<div class="ck" style="left:761px;top:514px;border-color:#333;background:#fff"></div>
<div class="cb" style="left:780px;top:510px;width:138px;height:19px;background:#cccccc;border-color:#bfbfbf"><div class="cb-t" style="color:#8d8d8d;line-height:19px;width:118px">None</div><svg width="10" height="6" style="position:absolute;right:3px;top:7.0px"><path d="M1 0.5 L5 4.5 L9 0.5" fill="none" stroke="#a9a9a9" stroke-width="1"/></svg></div>
<div class="sp" style="left:926px;top:511px;width:58px;height:18px;background:#f0f0f0;border-color:#c9c9c9"><div class="sp-t" style="color:#8c8c8c;line-height:17px">100</div><svg width="14" height="16" style="position:absolute;left:43px;top:1px"><rect x="0.5" y="0.5" width="13" height="15" fill="#ececec" stroke="#d8d8d8" stroke-width="1"/><rect x="0" y="7.2" width="14" height="1.6" fill="#d8d8d8"/><path d="M4 5.5 L6.5 2.5 L9 5.5 Z M4 10.5 L6.5 13.5 L9 10.5 Z" fill="#6a6a6a"/></svg></div>
<div class="sp" style="left:992px;top:511px;width:58px;height:18px;background:#f0f0f0;border-color:#c9c9c9"><div class="sp-t" style="color:#8c8c8c;line-height:17px">300</div><svg width="14" height="16" style="position:absolute;left:43px;top:1px"><rect x="0.5" y="0.5" width="13" height="15" fill="#ececec" stroke="#d8d8d8" stroke-width="1"/><rect x="0" y="7.2" width="14" height="1.6" fill="#d8d8d8"/><path d="M4 5.5 L6.5 2.5 L9 5.5 Z M4 10.5 L6.5 13.5 L9 10.5 Z" fill="#6a6a6a"/></svg></div>
<div class="sp" style="left:1058px;top:511px;width:58px;height:18px;background:#f0f0f0;border-color:#c9c9c9"><div class="sp-t" style="color:#8c8c8c;line-height:17px">0.050</div><svg width="14" height="16" style="position:absolute;left:43px;top:1px"><rect x="0.5" y="0.5" width="13" height="15" fill="#ececec" stroke="#d8d8d8" stroke-width="1"/><rect x="0" y="7.2" width="14" height="1.6" fill="#d8d8d8"/><path d="M4 5.5 L6.5 2.5 L9 5.5 Z M4 10.5 L6.5 13.5 L9 10.5 Z" fill="#6a6a6a"/></svg></div>
<div class="tb" style="left:1124px;top:511px;width:38px;height:17px;background:#f5f5f5;border-color:#5f5f5f;color:#000;line-height:18px">0.0</div>
<div class="tb" style="left:1169px;top:498px;width:38px;height:17px;background:#f5f5f5;border-color:#5f5f5f;color:#000;line-height:18px">0.0</div>
<svg style="position:absolute;left:1217px;top:503px" width="7" height="9"><ellipse cx="3" cy="3" rx="1.7" ry="1.8" fill="none" stroke="#111" stroke-width="1"/><line x1="1" x2="5" y1="6.5" y2="6.5" stroke="#111" stroke-width="1"/></svg>
<div class="t" style="right:1367px;top:545px;color:#000;font-size:12px;letter-spacing:-0.6px;">Pitch</div>
<div class="cb" style="left:209px;top:541px;width:134px;height:19px;background:#e1e1e1;border-color:#adadad"><div class="cb-t" style="color:#000;line-height:19px;width:114px">Pitch position (<span class="o">º</span>)</div><svg width="10" height="6" style="position:absolute;right:3px;top:7.0px"><path d="M1 0.5 L5 4.5 L9 0.5" fill="none" stroke="#3a3a3a" stroke-width="1"/></svg></div>
<div class="tb" style="left:351px;top:541px;width:38px;height:17px;background:#f5f5f5;border-color:#5f5f5f;color:#000;line-height:18px">0.0</div>
<div class="sp" style="left:397px;top:542px;width:58px;height:18px;background:#ffffff;border-color:#a9a9a9"><div class="sp-t" style="color:#000;line-height:17px">1.000</div><svg width="14" height="16" style="position:absolute;left:43px;top:1px"><rect x="0.5" y="0.5" width="13" height="15" fill="#eaeaea" stroke="#b4b4b4" stroke-width="1"/><rect x="0" y="7.2" width="14" height="1.6" fill="#b4b4b4"/><path d="M4 5.5 L6.5 2.5 L9 5.5 Z M4 10.5 L6.5 13.5 L9 10.5 Z" fill="#000"/></svg></div>
<div style="position:absolute;left:467px;top:549px;width:192px;height:5px;background:#cdcdcd"></div>
<div style="position:absolute;left:559px;top:543px;width:9px;height:16px;background:#0062c9"></div>
<div class="ck" style="left:670px;top:544px;border-color:#333;background:#fff"></div>
<div class="bt" style="left:690px;top:542px;width:16px;height:15px;line-height:16px">0</div>
<div class="sp" style="left:715px;top:541px;width:58px;height:18px;background:#ffffff;border-color:#a9a9a9"><div class="sp-t" style="color:#000;line-height:17px">10</div><svg width="14" height="16" style="position:absolute;left:43px;top:1px"><rect x="0.5" y="0.5" width="13" height="15" fill="#eaeaea" stroke="#b4b4b4" stroke-width="1"/><rect x="0" y="7.2" width="14" height="1.6" fill="#b4b4b4"/><path d="M4 5.5 L6.5 2.5 L9 5.5 Z M4 10.5 L6.5 13.5 L9 10.5 Z" fill="#000"/></svg></div>
<div class="cb" style="left:780px;top:540px;width:138px;height:19px;background:#e1e1e1;border-color:#adadad"><div class="cb-t" style="color:#000;line-height:19px;width:118px">None</div><svg width="10" height="6" style="position:absolute;right:3px;top:7.0px"><path d="M1 0.5 L5 4.5 L9 0.5" fill="none" stroke="#3a3a3a" stroke-width="1"/></svg></div>
<div class="sp" style="left:926px;top:541px;width:58px;height:18px;background:#f0f0f0;border-color:#c9c9c9"><div class="sp-t" style="color:#8c8c8c;line-height:17px">100</div><svg width="14" height="16" style="position:absolute;left:43px;top:1px"><rect x="0.5" y="0.5" width="13" height="15" fill="#ececec" stroke="#d8d8d8" stroke-width="1"/><rect x="0" y="7.2" width="14" height="1.6" fill="#d8d8d8"/><path d="M4 5.5 L6.5 2.5 L9 5.5 Z M4 10.5 L6.5 13.5 L9 10.5 Z" fill="#6a6a6a"/></svg></div>
<div class="sp" style="left:992px;top:541px;width:58px;height:18px;background:#f0f0f0;border-color:#c9c9c9"><div class="sp-t" style="color:#8c8c8c;line-height:17px">300</div><svg width="14" height="16" style="position:absolute;left:43px;top:1px"><rect x="0.5" y="0.5" width="13" height="15" fill="#ececec" stroke="#d8d8d8" stroke-width="1"/><rect x="0" y="7.2" width="14" height="1.6" fill="#d8d8d8"/><path d="M4 5.5 L6.5 2.5 L9 5.5 Z M4 10.5 L6.5 13.5 L9 10.5 Z" fill="#6a6a6a"/></svg></div>
<div class="sp" style="left:1058px;top:541px;width:58px;height:18px;background:#ffffff;border-color:#a9a9a9"><div class="sp-t" style="color:#000;line-height:17px">1.000</div><svg width="14" height="16" style="position:absolute;left:43px;top:1px"><rect x="0.5" y="0.5" width="13" height="15" fill="#eaeaea" stroke="#b4b4b4" stroke-width="1"/><rect x="0" y="7.2" width="14" height="1.6" fill="#b4b4b4"/><path d="M4 5.5 L6.5 2.5 L9 5.5 Z M4 10.5 L6.5 13.5 L9 10.5 Z" fill="#000"/></svg></div>
<div class="tb" style="left:1124px;top:541px;width:38px;height:17px;background:#f5f5f5;border-color:#5f5f5f;color:#000;line-height:18px">0.0</div>
<div class="t" style="right:819px;top:568px;color:#000;font-size:12px;letter-spacing:-0.6px;">Mix surge in pitch</div>
<div class="ck" style="left:761px;top:569px;border-color:#333;background:#fff"></div>
<div class="cb" style="left:780px;top:565px;width:138px;height:19px;background:#cccccc;border-color:#bfbfbf"><div class="cb-t" style="color:#8d8d8d;line-height:19px;width:118px">None</div><svg width="10" height="6" style="position:absolute;right:3px;top:7.0px"><path d="M1 0.5 L5 4.5 L9 0.5" fill="none" stroke="#a9a9a9" stroke-width="1"/></svg></div>
<div class="sp" style="left:926px;top:566px;width:58px;height:18px;background:#f0f0f0;border-color:#c9c9c9"><div class="sp-t" style="color:#8c8c8c;line-height:17px">100</div><svg width="14" height="16" style="position:absolute;left:43px;top:1px"><rect x="0.5" y="0.5" width="13" height="15" fill="#ececec" stroke="#d8d8d8" stroke-width="1"/><rect x="0" y="7.2" width="14" height="1.6" fill="#d8d8d8"/><path d="M4 5.5 L6.5 2.5 L9 5.5 Z M4 10.5 L6.5 13.5 L9 10.5 Z" fill="#6a6a6a"/></svg></div>
<div class="sp" style="left:992px;top:566px;width:58px;height:18px;background:#f0f0f0;border-color:#c9c9c9"><div class="sp-t" style="color:#8c8c8c;line-height:17px">300</div><svg width="14" height="16" style="position:absolute;left:43px;top:1px"><rect x="0.5" y="0.5" width="13" height="15" fill="#ececec" stroke="#d8d8d8" stroke-width="1"/><rect x="0" y="7.2" width="14" height="1.6" fill="#d8d8d8"/><path d="M4 5.5 L6.5 2.5 L9 5.5 Z M4 10.5 L6.5 13.5 L9 10.5 Z" fill="#6a6a6a"/></svg></div>
<div class="sp" style="left:1058px;top:566px;width:58px;height:18px;background:#f0f0f0;border-color:#c9c9c9"><div class="sp-t" style="color:#8c8c8c;line-height:17px">0.050</div><svg width="14" height="16" style="position:absolute;left:43px;top:1px"><rect x="0.5" y="0.5" width="13" height="15" fill="#ececec" stroke="#d8d8d8" stroke-width="1"/><rect x="0" y="7.2" width="14" height="1.6" fill="#d8d8d8"/><path d="M4 5.5 L6.5 2.5 L9 5.5 Z M4 10.5 L6.5 13.5 L9 10.5 Z" fill="#6a6a6a"/></svg></div>
<div class="tb" style="left:1124px;top:566px;width:38px;height:17px;background:#f5f5f5;border-color:#5f5f5f;color:#000;line-height:18px">0.0</div>
<div class="tb" style="left:1169px;top:553px;width:38px;height:17px;background:#f5f5f5;border-color:#5f5f5f;color:#000;line-height:18px">0.0</div>
<svg style="position:absolute;left:1217px;top:558px" width="7" height="9"><ellipse cx="3" cy="3" rx="1.7" ry="1.8" fill="none" stroke="#111" stroke-width="1"/><line x1="1" x2="5" y1="6.5" y2="6.5" stroke="#111" stroke-width="1"/></svg>
<div class="cb" style="left:209px;top:586px;width:134px;height:19px;background:#e1e1e1;border-color:#adadad"><div class="cb-t" style="color:#000;line-height:19px;width:114px">Local translation</div><svg width="10" height="6" style="position:absolute;right:3px;top:7.0px"><path d="M1 0.5 L5 4.5 L9 0.5" fill="none" stroke="#3a3a3a" stroke-width="1"/></svg></div>
</body></html>
